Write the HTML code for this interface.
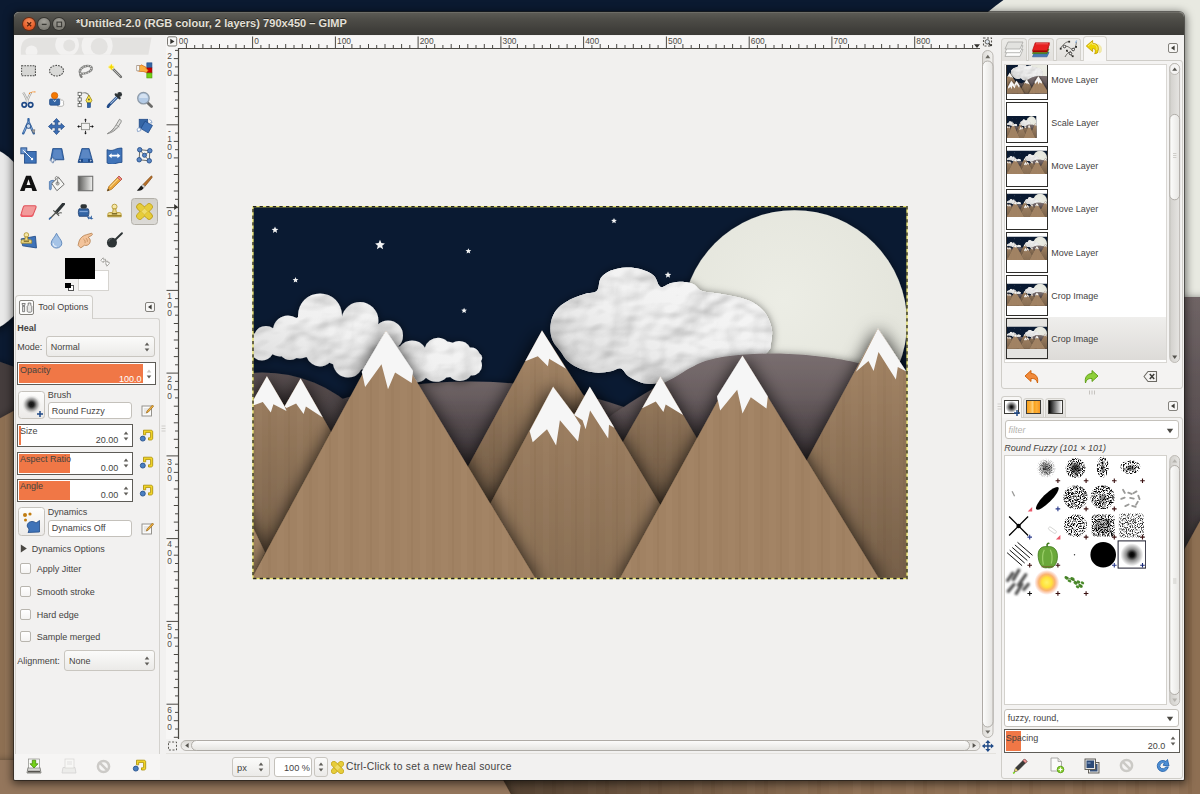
<!DOCTYPE html>
<html>
<head>
<meta charset="utf-8">
<title>GIMP</title>
<style>
*{box-sizing:border-box;margin:0;padding:0}
html,body{width:1200px;height:794px;overflow:hidden}
body{position:relative;font-family:"Liberation Sans",sans-serif;font-size:9px;color:#45433f;background:#0b1a31}
.sb{font-size:10.3px;letter-spacing:.27px}
.abs{position:absolute}
#desk{position:absolute;left:0;top:0;width:1200px;height:794px}
#win{position:absolute;left:14px;top:12px;width:1170px;height:768px;background:#f2f1f0;border-radius:5px 5px 1px 1px;box-shadow:0 2px 9px 2px rgba(0,0,0,.55),0 0 0 1px rgba(40,38,34,.55)}
#tbar{position:absolute;left:0;top:0;width:1170px;height:23.3px;border-radius:5px 5px 0 0;background:linear-gradient(#5b5a54 0,#4d4c47 30%,#403f3b 75%,#3b3a36 100%);border-top:1px solid #6d6c66}
#title{position:absolute;left:62px;top:3.5px;color:#e4e0d8;font-weight:bold;font-size:11px;letter-spacing:.05px;white-space:nowrap;text-shadow:0 -1px 0 rgba(0,0,0,.5)}
.wb{position:absolute;top:5px;width:12.4px;height:12.4px;border-radius:50%}
/* generic widgets */
.txt{position:absolute;white-space:nowrap;line-height:12px;height:12px}
.combo{position:absolute;border:1px solid #c9c6c0;border-radius:3px;background:linear-gradient(#fbfbfa,#ebeae8)}
.entry{position:absolute;border:1px solid #c4c1bb;border-radius:3px;background:#fff}
.slider{position:absolute;border:1px solid #5e5c57;background:#fff}
.fill{position:absolute;left:1px;top:1px;bottom:1px;background:#f07746}
.chk{position:absolute;width:11px;height:11px;border:1px solid #b8b5ae;border-radius:2px;background:linear-gradient(#fff,#f4f3f2)}
</style>
</head>
<body>
<!-- DESKTOP WALLPAPER -->
<svg id="desk" viewBox="0 0 1200 794">
  <defs>
   <pattern id="dcb" width="53" height="10" patternUnits="userSpaceOnUse"><rect width="53" height="10" fill="#8e6f53"/><rect x="5" width="8" height="10" fill="#937458"/><rect x="22" width="4" height="10" fill="#896a4e"/><rect x="34" width="9" height="10" fill="#917256"/></pattern>
   <linearGradient id="dhl" x1="0" y1="297" x2="0" y2="540" gradientUnits="userSpaceOnUse"><stop offset="0" stop-color="#6f6465"/><stop offset=".5" stop-color="#5a5052"/><stop offset="1" stop-color="#3a3435"/></linearGradient>
   <filter id="dsh" x="-20%" y="-20%" width="140%" height="140%"><feDropShadow dx="0" dy="2" stdDeviation="5" flood-color="#000" flood-opacity=".6"/></filter>
  </defs>
  <rect width="1200" height="794" fill="#0b1a31"/>
  <circle cx="1190" cy="260" r="320" fill="#e8e9e1"/>
  <rect x="1150" y="297" width="60" height="300" fill="url(#dhl)" filter="url(#dsh)"/>
  <ellipse cx="-20" cy="239" rx="60" ry="93" fill="#e9e9e9" filter="url(#dsh)"/>
  <polygon points="-5,360 20,369 20,430 -5,430" fill="#453d3e" filter="url(#dsh)"/>
  <polygon points="-5,421 20,407.5 20,800 -5,800" fill="url(#dcb)" filter="url(#dsh)"/>
  <polygon points="1170,575.5 1205,512 1205,800 1170,800" fill="url(#dcb)" filter="url(#dsh)"/>
  <rect x="-5" y="770" width="1210" height="30" fill="url(#dcb)"/>
  <linearGradient id="dbs" x1="500" y1="0" x2="860" y2="0" gradientUnits="userSpaceOnUse"><stop offset="0" stop-color="#000" stop-opacity=".42"/><stop offset=".5" stop-color="#000" stop-opacity=".2"/><stop offset="1" stop-color="#000" stop-opacity="0"/></linearGradient>
  <rect x="500" y="770" width="360" height="30" fill="url(#dbs)"/>
  <polygon points="-5,760 492,760 514,800 -5,800" fill="#94765b" filter="url(#dsh)"/>
</svg>

<!-- WINDOW -->
<div id="win">
  <div id="tbar">
    <div class="wb" style="left:8.6px;background:radial-gradient(circle at 50% 30%,#f7925f,#e65a26 65%,#d64e1d);box-shadow:0 0 0 1px #6e2c12"></div>
    <div class="wb" style="left:23.6px;background:radial-gradient(circle at 50% 30%,#a3a19a,#7f7d76 70%);box-shadow:0 0 0 1px #363531"></div>
    <div class="wb" style="left:38.6px;background:radial-gradient(circle at 50% 30%,#a3a19a,#7f7d76 70%);box-shadow:0 0 0 1px #363531"></div>
    <svg class="abs" style="left:8.6px;top:5px" width="43" height="13" viewBox="0 0 43 13"><path d="M4.2,4.2l4,4M8.200,4.200l-4,4" stroke="#5e230c" stroke-width="1.300"/><path d="M18.800,6.400h4.800" stroke="#3a3935" stroke-width="1.300"/><rect x="34" y="4.100" width="4.600" height="4.600" fill="none" stroke="#3a3935" stroke-width="1.100"/></svg>
    <div id="title">*Untitled-2.0 (RGB colour, 2 layers) 790x450 – GIMP</div>
  </div>
</div>

<!-- CANVAS AREA (absolute page coords) -->
<div id="canvas" class="abs" style="left:178px;top:48px;width:803px;height:691px;background:#f1f0ee"></div>
<!--RULERS-->
<svg class="abs" style="left:0;top:0" width="1200" height="794" viewBox="0 0 1200 794" id="rulers">
<rect x="166" y="36" width="814" height="12.5" fill="#f7f6f5"/><rect x="166" y="48" width="12.5" height="691" fill="#f7f6f5"/>
<clipPath id="rtc"><rect x="179" y="36" width="801" height="13"/></clipPath><clipPath id="rlc"><rect x="166" y="49" width="13" height="690"/></clipPath>
<path d="M178,48.5H980" stroke="#4b4944" stroke-width="1.2" fill="none"/>
<path d="M178.5,48V739" stroke="#4b4944" stroke-width="1.2" fill="none"/>
<g clip-path="url(#rtc)"><path d="M186.4,44V48M194.7,45V48M202.9,44V48M211.2,45V48M219.5,44V48M227.8,45V48M236.0,44V48M244.3,45V48M252.6,36.5V48M260.9,45V48M269.2,44V48M277.4,45V48M285.7,44V48M294.0,45V48M302.3,44V48M310.5,45V48M318.8,44V48M327.1,45V48M335.4,36.5V48M343.6,45V48M351.9,44V48M360.2,45V48M368.5,44V48M376.7,45V48M385.0,44V48M393.3,45V48M401.6,44V48M409.8,45V48M418.1,36.5V48M426.4,45V48M434.7,44V48M442.9,45V48M451.2,44V48M459.5,45V48M467.8,44V48M476.0,45V48M484.3,44V48M492.6,45V48M500.9,36.5V48M509.2,45V48M517.4,44V48M525.7,45V48M534.0,44V48M542.3,45V48M550.5,44V48M558.8,45V48M567.1,44V48M575.4,45V48M583.6,36.5V48M591.9,45V48M600.2,44V48M608.5,45V48M616.7,44V48M625.0,45V48M633.3,44V48M641.6,45V48M649.8,44V48M658.1,45V48M666.4,36.5V48M674.7,45V48M682.9,44V48M691.2,45V48M699.5,44V48M707.8,45V48M716.1,44V48M724.3,45V48M732.6,44V48M740.9,45V48M749.2,36.5V48M757.4,45V48M765.7,44V48M774.0,45V48M782.3,44V48M790.5,45V48M798.8,44V48M807.1,45V48M815.4,44V48M823.6,45V48M831.9,36.5V48M840.2,45V48M848.5,44V48M856.7,45V48M865.0,44V48M873.3,45V48M881.6,44V48M889.8,45V48M898.1,44V48M906.4,45V48M914.7,36.5V48M922.9,45V48M931.2,44V48M939.5,45V48M947.8,44V48M956.1,45V48M964.3,44V48M972.6,45V48" stroke="#4b4944" stroke-width="1" fill="none"/>
<g font-family="Liberation Sans, sans-serif" font-size="8.4" fill="#4f4d48">
<text x="171.4" y="44.3">-100</text>
<text x="254.2" y="44.3">0</text>
<text x="337.0" y="44.3">100</text>
<text x="419.7" y="44.3">200</text>
<text x="502.5" y="44.3">300</text>
<text x="585.2" y="44.3">400</text>
<text x="668.0" y="44.3">500</text>
<text x="750.8" y="44.3">600</text>
<text x="833.5" y="44.3">700</text>
<text x="916.3" y="44.3">800</text>
</g></g>
<g clip-path="url(#rlc)"><path d="M175,50.4H178M173.8,58.6H178M175,66.9H178M173.8,75.2H178M175,83.5H178M173.8,91.7H178M175,100.0H178M173.8,108.3H178M175,116.6H178M166.5,124.8H178M175,133.1H178M173.8,141.4H178M175,149.7H178M173.8,157.9H178M175,166.2H178M173.8,174.5H178M175,182.8H178M173.8,191.0H178M175,199.3H178M166.5,207.6H178M175,215.9H178M173.8,224.2H178M175,232.4H178M173.8,240.7H178M175,249.0H178M173.8,257.3H178M175,265.5H178M173.8,273.8H178M175,282.1H178M166.5,290.4H178M175,298.6H178M173.8,306.9H178M175,315.2H178M173.8,323.5H178M175,331.7H178M173.8,340.0H178M175,348.3H178M173.8,356.6H178M175,364.8H178M166.5,373.1H178M175,381.4H178M173.8,389.7H178M175,397.9H178M173.8,406.2H178M175,414.5H178M173.8,422.8H178M175,431.0H178M173.8,439.3H178M175,447.6H178M166.5,455.9H178M175,464.2H178M173.8,472.4H178M175,480.7H178M173.8,489.0H178M175,497.3H178M173.8,505.5H178M175,513.8H178M173.8,522.1H178M175,530.4H178M166.5,538.6H178M175,546.9H178M173.8,555.2H178M175,563.5H178M173.8,571.7H178M175,580.0H178M173.8,588.3H178M175,596.6H178M173.8,604.8H178M175,613.1H178M166.5,621.4H178M175,629.7H178M173.8,637.9H178M175,646.2H178M173.8,654.5H178M175,662.8H178M173.8,671.1H178M175,679.3H178M173.8,687.6H178M175,695.9H178M166.5,704.2H178M175,712.4H178M173.8,720.7H178M175,729.0H178M173.8,737.3H178" stroke="#4b4944" stroke-width="1" fill="none"/>
<g font-family="Liberation Sans, sans-serif" font-size="8.4" fill="#4f4d48" text-anchor="middle">
<text x="169.5" y="50.9">-</text>
<text x="169.5" y="59.2">2</text>
<text x="169.5" y="67.5">0</text>
<text x="169.5" y="75.8">0</text>
<text x="169.5" y="133.6">-</text>
<text x="169.5" y="141.9">1</text>
<text x="169.5" y="150.2">0</text>
<text x="169.5" y="158.5">0</text>
<text x="169.5" y="216.4">0</text>
<text x="169.5" y="299.2">1</text>
<text x="169.5" y="307.5">0</text>
<text x="169.5" y="315.8">0</text>
<text x="169.5" y="381.9">2</text>
<text x="169.5" y="390.2">0</text>
<text x="169.5" y="398.5">0</text>
<text x="169.5" y="464.7">3</text>
<text x="169.5" y="473.0">0</text>
<text x="169.5" y="481.3">0</text>
<text x="169.5" y="547.4">4</text>
<text x="169.5" y="555.7">0</text>
<text x="169.5" y="564.0">0</text>
<text x="169.5" y="630.2">5</text>
<text x="169.5" y="638.5">0</text>
<text x="169.5" y="646.8">0</text>
<text x="169.5" y="713.0">6</text>
<text x="169.5" y="721.3">0</text>
<text x="169.5" y="729.6">0</text>
</g></g>
<path d="M974,44.2h6l-3,3.8z" fill="#33322e"/>
<path d="M174.2,204h0l3.8,3-3.8,3z" fill="#33322e"/>
<rect x="167.5" y="36.8" width="9.2" height="9.2" rx="1.5" fill="#f7f6f5" stroke="#6d6b65" stroke-width=".9"/><path d="M170.3,38.8v5.2l4.2,-2.6z" fill="#33322e"/>
</svg>
<!--/RULERS-->

<!--ART-->
<svg id="art" class="abs" style="left:253px;top:206.6px" width="654" height="372" viewBox="0 0 654 372">
<symbol id="artsym" viewBox="0 0 654 372" preserveAspectRatio="none">
<defs>
<linearGradient id="cb" x1="0" y1="0" x2="1" y2="0" gradientUnits="objectBoundingBox"><stop offset="0" stop-color="#9c7c5c"/><stop offset=".5" stop-color="#a98969"/><stop offset="1" stop-color="#a08060"/></linearGradient>
<pattern id="cbp" width="41" height="10" patternUnits="userSpaceOnUse"><rect width="41" height="10" fill="#a18263"/><rect x="3" width="6" height="10" fill="#a48566"/><rect x="15" width="3" height="10" fill="#9e7f60"/><rect x="24" width="7" height="10" fill="#a38465"/><rect x="35" width="2" height="10" fill="#9d7e5f"/></pattern>
<linearGradient id="hg" x1="0" y1="146" x2="0" y2="330" gradientUnits="userSpaceOnUse"><stop offset="0" stop-color="#7a6f70"/><stop offset=".22" stop-color="#6a5f61"/><stop offset=".42" stop-color="#50474a"/><stop offset=".64" stop-color="#3a3336"/><stop offset="1" stop-color="#292426"/></linearGradient>
<linearGradient id="hg1" x1="0" y1="0" x2="1" y2="1"><stop offset="0" stop-color="#6a5f60"/><stop offset=".6" stop-color="#463d3f"/><stop offset="1" stop-color="#2f292b"/></linearGradient>
<radialGradient id="mg" cx=".45" cy=".4" r=".7"><stop offset="0" stop-color="#ecede5"/><stop offset=".8" stop-color="#e4e5dc"/><stop offset="1" stop-color="#d6d7ce"/></radialGradient>
<filter id="sh" x="-30%" y="-30%" width="160%" height="160%"><feDropShadow dx="0" dy="1" stdDeviation="9" flood-color="#000" flood-opacity=".85"/></filter>
<filter id="sh2" x="-30%" y="-30%" width="160%" height="160%"><feDropShadow dx="0" dy="1" stdDeviation="4" flood-color="#000" flood-opacity=".55"/></filter>
<filter id="cr" x="0" y="0" width="100%" height="100%" color-interpolation-filters="sRGB"><feTurbulence type="fractalNoise" baseFrequency=".02 .028" numOctaves="3" seed="11" result="n"/><feDiffuseLighting in="n" surfaceScale="3.6" diffuseConstant="1.06" lighting-color="#ffffff" result="l"><feDistantLight azimuth="230" elevation="66"/></feDiffuseLighting><feComposite in="l" in2="SourceAlpha" operator="in" result="lc"/><feBlend in="SourceGraphic" in2="lc" mode="multiply"/></filter>
<linearGradient id="dk" x1="0" y1="150" x2="0" y2="372" gradientUnits="userSpaceOnUse"><stop offset="0" stop-color="#000" stop-opacity="0"/><stop offset="1" stop-color="#000" stop-opacity=".5"/></linearGradient>
<linearGradient id="cg" x1="1" y1="0" x2="0" y2="1"><stop offset="0" stop-color="#f8f8f8"/><stop offset=".55" stop-color="#f0f0f0"/><stop offset="1" stop-color="#d4d4d4"/></linearGradient>
<clipPath id="ac"><rect width="654" height="372"/></clipPath>
</defs>
<g clip-path="url(#ac)">
<rect width="654" height="372" fill="#0a1a32"/>
<g fill="#f4f4f4">
<polygon points="22.0,19.4 23.0,21.7 25.4,21.9 23.5,23.5 24.1,25.9 22.0,24.6 19.9,25.9 20.5,23.5 18.6,21.9 21.0,21.7"/>
<polygon points="127.0,32.8 128.4,36.1 131.9,36.4 129.2,38.7 130.1,42.2 127.0,40.3 123.9,42.2 124.8,38.7 122.1,36.4 125.6,36.1"/>
<polygon points="215.4,41.2 216.2,43.1 218.3,43.3 216.7,44.6 217.2,46.6 215.4,45.6 213.6,46.6 214.1,44.6 212.5,43.3 214.6,43.1"/>
<polygon points="42.5,70.1 43.3,72.0 45.4,72.2 43.8,73.5 44.3,75.5 42.5,74.5 40.7,75.5 41.2,73.5 39.6,72.2 41.7,72.0"/>
<polygon points="211.1,100.7 211.9,102.6 214.0,102.8 212.4,104.1 212.9,106.1 211.1,105.1 209.3,106.1 209.8,104.1 208.2,102.8 210.3,102.6"/>
<polygon points="361.0,10.9 361.8,12.8 363.9,13.0 362.3,14.3 362.8,16.3 361.0,15.2 359.2,16.3 359.7,14.3 358.1,13.0 360.2,12.8"/>
<polygon points="415.0,64.6 415.9,66.8 418.2,66.9 416.5,68.5 417.0,70.8 415.0,69.5 413.0,70.8 413.5,68.5 411.8,66.9 414.1,66.8"/>
</g>
<circle cx="541.5" cy="115.7" r="112.5" fill="url(#mg)" filter="url(#sh2)"/>
<g filter="url(#sh2)"><path d="M344.0,83.7C346.5,81.1 345.5,74.5 347.8,71.1C350.1,67.7 353.6,65.4 357.8,63.6C362.0,61.8 368.0,60.7 373.0,60.5C378.0,60.3 383.4,60.9 388.0,62.3C392.6,63.6 397.5,65.7 400.7,68.6C404.0,71.5 404.6,78.7 407.5,79.9C410.4,81.2 414.4,76.9 418.3,76.1C422.2,75.3 427.1,74.7 430.9,74.9C434.7,75.1 438.1,75.9 441.0,77.4C443.9,78.9 444.7,82.2 448.5,83.7C452.3,85.2 457.7,85.2 463.6,86.2C469.5,87.3 477.9,88.5 483.8,90.0C489.7,91.5 494.7,92.9 498.9,95.0C503.1,97.1 506.3,99.9 509.0,102.6C511.7,105.3 513.6,107.8 515.3,111.4C517.0,115.0 518.6,119.8 519.0,124.0C519.4,128.2 518.6,133.0 517.8,136.6C517.0,140.2 519.1,140.6 514.0,145.4C508.9,150.2 498.2,159.9 487.0,165.4C475.8,170.9 460.1,176.6 447.0,178.4C433.9,180.2 416.4,176.7 408.2,176.4C400.1,176.2 401.5,177.0 398.1,176.9C394.8,176.8 391.9,176.9 388.1,175.6C384.3,174.3 378.9,171.6 375.5,169.3C372.1,166.9 370.8,162.3 367.9,161.5C364.9,160.7 362.0,163.6 357.8,164.3C353.6,165.0 347.7,166.0 342.7,165.6C337.7,165.2 332.2,163.7 327.6,161.8C323.0,159.9 318.4,157.1 315.0,154.2C311.6,151.3 310.0,147.6 307.5,144.2C305.0,140.9 301.6,137.9 299.9,134.1C298.2,130.3 297.4,125.7 297.4,121.5C297.4,117.3 298.2,112.7 299.9,108.9C301.6,105.1 304.1,101.7 307.5,98.8C310.9,95.9 315.8,93.3 320.0,91.3C324.2,89.3 328.6,88.0 332.6,86.7C336.6,85.4 341.5,86.3 344.0,83.7Z" fill="url(#cg)" filter="url(#cr)"/></g>
<circle cx="217.0" cy="651.4" r="477" fill="url(#hg)" filter="url(#sh2)"/>
<path d="M307.0,263.4C313.7,255.9 336.5,228.9 347.0,218.4C357.5,207.9 361.5,206.3 370.0,200.4C378.5,194.5 389.2,188.1 398.0,182.9C406.8,177.7 416.5,173.1 423.0,169.4C429.5,165.7 431.5,163.7 437.0,160.9C442.5,158.2 447.5,155.1 456.0,152.9C464.5,150.7 475.4,148.8 488.0,147.8C500.6,146.8 518.0,146.4 531.5,146.7C545.0,147.0 557.1,148.3 569.0,149.7C580.9,151.2 588.3,152.1 603.0,155.4C617.7,158.7 648.0,167.1 657.0,169.4L667.0,393.4 L307.0,393.4 Z" fill="url(#hg)" filter="url(#sh2)"/>
<circle cx="9.0" cy="302.4" r="137" fill="url(#hg1)" filter="url(#sh2)"/>
<clipPath id="c1p"><circle cx="67.0" cy="108.4" r="22.0"/><circle cx="107.0" cy="113.4" r="18.4"/><circle cx="135.0" cy="128.4" r="15.0"/><circle cx="35.0" cy="123.4" r="15.0"/><circle cx="13.0" cy="131.4" r="12.4"/><circle cx="1.0" cy="138.4" r="12.0"/><circle cx="-9.0" cy="139.4" r="12.0"/><circle cx="9.0" cy="141.4" r="12.0"/><circle cx="37.0" cy="141.4" r="11.6"/><circle cx="67.0" cy="145.4" r="14.0"/><circle cx="95.0" cy="155.4" r="15.0"/><circle cx="57.0" cy="128.4" r="22.0"/><circle cx="87.0" cy="136.4" r="22.0"/><circle cx="27.0" cy="134.4" r="15.0"/><circle cx="109.0" cy="144.4" r="18.0"/><circle cx="119.0" cy="151.4" r="14.0"/><circle cx="47.0" cy="137.4" r="14.0"/><circle cx="185.0" cy="144.4" r="13.6"/><circle cx="206.0" cy="146.4" r="12.4"/><circle cx="218.0" cy="149.4" r="9.0"/><circle cx="224.0" cy="150.8" r="5.2"/><circle cx="159.0" cy="148.4" r="15.0"/><circle cx="183.0" cy="160.4" r="14.4"/><circle cx="207.0" cy="160.4" r="13.6"/><circle cx="219.0" cy="158.4" r="10.0"/><circle cx="163.0" cy="162.4" r="13.0"/><circle cx="193.0" cy="152.4" r="18.0"/><circle cx="147.0" cy="153.4" r="14.0"/><circle cx="88.0" cy="117.4" r="6.0"/><circle cx="119.0" cy="131.4" r="6.0"/><circle cx="51.0" cy="119.4" r="6.0"/><circle cx="24.0" cy="127.4" r="5.0"/></clipPath>
<g filter="url(#sh2)"><g clip-path="url(#c1p)"><rect x="-10" y="80" width="250" height="105" fill="url(#cg)" filter="url(#cr)"/></g></g>
<g filter="url(#sh)"><polygon points="-105.3,378.4 13.9,169.3 31.6,199.6 47.6,171.6 165.5,378.4" fill="url(#cbp)"/><polygon points="-105.3,378.4 13.9,169.3 31.6,199.6 47.6,171.6 165.5,378.4" fill="url(#dk)" opacity=".55"/>
<polygon points="13.9,169.3 -3.0,198.9 1.5,198.0 9.8,195.0 17.8,205.6 20.4,197.3 33.5,203.9 31.6,199.6" fill="#f6f6f6"/>
<polygon points="47.6,171.6 31.6,199.6 33.5,201.1 43.1,196.5 50.6,207.1 52.9,199.5 69.8,210.4" fill="#f6f6f6"/></g>
<g filter="url(#sh)"><polygon points="-13.0,293.4 12.0,345.4 -13.0,393.4" fill="url(#cbp)"/></g>
<g filter="url(#sh)"><polygon points="150.5,378.4 289.0,123.4 451.9,378.4" fill="url(#cbp)"/><polygon points="150.5,378.4 289.0,123.4 451.9,378.4" fill="url(#dk)" opacity="1"/><polygon points="289.0,123.4 272.2,154.2 284.8,149.2 294.9,159.3 296.1,151.7 313.0,161.8" fill="#f6f6f6"/></g>
<g filter="url(#sh)"><polygon points="288.1,378.4 407.4,169.4 530.3,378.4" fill="url(#cbp)"/><polygon points="288.1,378.4 407.4,169.4 530.3,378.4" fill="url(#dk)" opacity="1"/><polygon points="407.4,169.4 389.2,201.2 402.8,194.4 410.4,205.0 412.7,197.4 430.0,208.0" fill="#f6f6f6"/></g>
<g filter="url(#sh)"><polygon points="486.2,378.4 625.0,121.4 790.5,378.4" fill="url(#cbp)"/><polygon points="486.2,378.4 625.0,121.4 790.5,378.4" fill="url(#dk)" opacity="0.55"/><polygon points="625.0,121.4 602.9,164.8 615.5,154.0 620.6,163.9 625.5,145.0 642.9,172.4 644.8,160.1 652.4,163.9 654.0,165.4" fill="#f6f6f6"/></g>
<g filter="url(#sh)"><polygon points="193.6,378.4 300.1,179.7 321.2,208.0 336.8,179.7 455.2,378.4" fill="url(#cbp)"/><polygon points="193.6,378.4 300.1,179.7 321.2,208.0 336.8,179.7 455.2,378.4" fill="url(#dk)" opacity=".3"/>
<polygon points="300.1,179.7 276.6,223.9 279.7,235.2 294.0,222.3 303.1,238.5 306.9,213.3 325.0,234.4 327.7,218.6 321.2,208.0" fill="#f6f6f6"/>
<polygon points="336.8,179.7 321.2,208.0 329.5,213.3 332.6,222.3 337.1,203.4 355.2,231.4 356.0,217.8 361.3,220.8" fill="#f6f6f6"/></g>
<g filter="url(#sh)"><polygon points="-5.0,378.4 133.0,123.7 286.5,378.4" fill="url(#cbp)"/><polygon points="133.0,123.7 108.8,164.8 112.1,179.9 128.5,157.2 135.0,182.2 142.1,165.5 158.7,176.1 159.9,164.0" fill="#f6f6f6"/></g>
<g filter="url(#sh)"><polygon points="363.2,378.4 489.5,148.7 630.1,378.4" fill="url(#cbp)"/><polygon points="489.5,148.7 464.0,189.4 467.2,203.5 484.2,182.8 489.5,206.4 497.8,190.3 513.5,201.6 514.8,189.4" fill="#f6f6f6"/></g>
</g>
</symbol>
<use href="#artsym" width="654" height="372"/>
</svg>
<!--/ART-->

<!--TOOLBOX-->
<svg class="abs" style="left:20px;top:36.5px" width="133" height="19" viewBox="0 0 133 19"><clipPath id="wc"><path d="M.9,17.8V13Q.9,.6 14,.6H131.5L128.4,17.8z"/></clipPath><g clip-path="url(#wc)"><rect width="133" height="19" fill="#e3e2e0"/><circle cx="11.5" cy="14.5" r="6" fill="#f2f1f0"/><circle cx="47.1" cy="7.5" r="11.9" fill="#f2f1f0"/><circle cx="49.250" cy="8.5" r="6" fill="#e3e2e0"/><circle cx="77.1" cy="8.750" r="15.6" fill="#f2f1f0"/><circle cx="79.250" cy="9.4" r="8.5" fill="#e3e2e0"/></g></svg>
<div class="abs" style="left:131px;top:198.4px;width:27px;height:26.4px;border:1px solid #b3b0a9;border-radius:3.5px;background:linear-gradient(#d2d0cb,#dcdad6)"></div>
<svg class="abs" style="left:19.7px;top:61.5px" width="17" height="17" viewBox="0 0 16 16"><rect x="1.5" y="3.5" width="13" height="9.5" fill="#d6d6d4"/><rect x="1.5" y="3.5" width="13" height="9.5" fill="none" stroke="#4a4a48" stroke-width="1" stroke-dasharray="1.6 1"/></svg>
<svg class="abs" style="left:48.4px;top:61.5px" width="17" height="17" viewBox="0 0 16 16"><ellipse cx="8" cy="8.2" rx="6.6" ry="5" fill="#dadad8"/><ellipse cx="8" cy="8.2" rx="6.6" ry="5" fill="none" stroke="#4a4a48" stroke-width="1" stroke-dasharray="1.6 1"/></svg>
<svg class="abs" style="left:77.2px;top:61.5px" width="17" height="17" viewBox="0 0 16 16"><path d="M3.6,11.2C1,8.5 4.5,3.6 10,3.6c4.5,0 5,3.2 2,5.2c-2.8,1.9 -6,2.6 -8.4,2.4c-.9,0 -.6,1.4 .6,2.8" fill="none" stroke="#7d7d7b" stroke-width="2.2" stroke-linecap="round"/><path d="M3.6,11.2C1,8.5 4.5,3.6 10,3.6c4.5,0 5,3.2 2,5.2c-2.8,1.9 -6,2.6 -8.4,2.4" fill="none" stroke="#d9d9d7" stroke-width="1" stroke-dasharray="1.2 1.2"/></svg>
<svg class="abs" style="left:106.1px;top:61.5px" width="17" height="17" viewBox="0 0 16 16"><path d="M6.5,6.5L14,14" stroke="#6e6e6c" stroke-width="2.4" stroke-linecap="round"/><path d="M7,7L13.6,13.6" stroke="#c9c9c7" stroke-width=".8"/><circle cx="5" cy="4.8" r="2.6" fill="#fff6a8"/><path d="M5,1.6l.9,2.3 2.3,.9-2.3,.9-.9,2.3-.9,-2.3-2.3,-.9 2.3,-.9z" fill="#f4d800"/></svg>
<svg class="abs" style="left:135.5px;top:61.5px" width="17" height="17" viewBox="0 0 16 16"><rect x="10.2" y=".8" width="4.8" height="4.6" fill="#3465a4" stroke="#204a87" stroke-width=".6"/><rect x="10.2" y="5.6" width="4.8" height="4.6" fill="#cc0000" stroke="#8f0000" stroke-width=".6"/><rect x="10.2" y="10.4" width="4.8" height="4.6" fill="#73d216" stroke="#4e9a06" stroke-width=".6"/><path d="M1,3.5h3l1,-.8 4.5,2.2v1.2l2,1.6-1.6,2.2-3.2,-1H4L1,8.2z" fill="#fcaf3e" stroke="#ce5c00" stroke-width=".6"/><rect x=".8" y="3.4" width="2.2" height="4.9" fill="#fff" stroke="#888" stroke-width=".5"/></svg>
<svg class="abs" style="left:19.7px;top:90.5px" width="17" height="17" viewBox="0 0 16 16"><path d="M3,1.5c1.5,2 3,5.5 4.2,9M10.5,1.5c-1.5,2 -3,5.5 -4.2,9" stroke="#a8a8a6" stroke-width="2.2" fill="none"/><path d="M3,1.5c1.5,2 3,5.5 4.2,9M10.5,1.5c-1.5,2 -3,5.5 -4.2,9" stroke="#eeeeec" stroke-width=".9" fill="none"/><circle cx="4" cy="13" r="2.1" fill="none" stroke="#204a87" stroke-width="1.6"/><circle cx="10" cy="13" r="2.1" fill="none" stroke="#204a87" stroke-width="1.6"/><path d="M8.5,2.5c2,-1.5 4,-2 6.5,-1.5" stroke="#f57900" stroke-width="1" stroke-dasharray="1 .8" fill="none"/></svg>
<svg class="abs" style="left:48.4px;top:90.5px" width="17" height="17" viewBox="0 0 16 16"><path d="M9,9c0,-2 3,-2.2 3.4,-.4c1.8,-.4 3,1.2 2,2.6c1,1.2 .2,3.2 -1.4,3.2H9z" fill="#fff" stroke="#a0a09e" stroke-width=".7"/><rect x="1.5" y="7.5" width="9.5" height="5.8" rx="1" fill="#3465a4" stroke="#204a87" stroke-width=".7"/><path d="M5,8.2l1.3,2 1.3,-2" fill="none" stroke="#d9e4f2" stroke-width=".8"/><circle cx="6.2" cy="4.3" r="3" fill="#f57900" stroke="#ce5c00" stroke-width=".7"/></svg>
<svg class="abs" style="left:77.2px;top:90.5px" width="17" height="17" viewBox="0 0 16 16"><path d="M2.5,1.5V15" stroke="#555753" stroke-width="1"/><path d="M2.5,3c4,-2.5 8,-1.5 9,2" fill="none" stroke="#888a85" stroke-width="1"/><rect x="1" y="1.2" width="3" height="3" fill="#fff" stroke="#555753" stroke-width=".7"/><rect x="1" y="6.5" width="3" height="3" fill="#fff" stroke="#555753" stroke-width=".7"/><rect x="1" y="11.8" width="3" height="3" fill="#fff" stroke="#555753" stroke-width=".7"/><path d="M11.2,3.8l2.8,5-1.4,2.6h-2.8L8.4,8.8z" fill="#fce94f" stroke="#8f7a00" stroke-width=".7"/><circle cx="11.2" cy="8" r=".9" fill="#555"/><rect x="9.8" y="11.2" width="2.8" height="4.3" fill="#3465a4" stroke="#204a87" stroke-width=".6"/></svg>
<svg class="abs" style="left:106.1px;top:90.5px" width="17" height="17" viewBox="0 0 16 16"><path d="M11.5,4.8L4,12.2c-1,1 -1.6,1.2 -2,2.6" stroke="#204a87" stroke-width="2.6" stroke-linecap="round" fill="none"/><path d="M10.5,5.5L4.2,11.8" stroke="#a9c3e2" stroke-width="1" fill="none"/><path d="M9.2,3.2l3.6,3.6" stroke="#2e3436" stroke-width="2.2" stroke-linecap="round"/><circle cx="12.8" cy="3.2" r="2.3" fill="#2e3436"/></svg>
<svg class="abs" style="left:135.5px;top:90.5px" width="17" height="17" viewBox="0 0 16 16"><path d="M10.5,10.5L14.6,14.6" stroke="#6b6b69" stroke-width="2.6" stroke-linecap="round"/><circle cx="7" cy="6.8" r="5.4" fill="#b4cbe6" stroke="#8d9aa8" stroke-width="1.2"/><path d="M3,6.5a4,4 0 0 1 8,0z" fill="#d5e2f1"/></svg>
<svg class="abs" style="left:19.7px;top:118.3px" width="17" height="17" viewBox="0 0 16 16"><path d="M8,1v2.5M8,3.5L3,14.5M8,3.5l5,11" stroke="#3465a4" stroke-width="2.2" fill="none" stroke-linecap="round"/><path d="M8,3.5L3.4,13.6M8,3.5l4.6,10.1" stroke="#8fb0d9" stroke-width=".8" fill="none"/><circle cx="8" cy="7.6" r="2.2" fill="#c9d6e8" stroke="#204a87" stroke-width=".9"/><path d="M11,11.5l3,-.5-1,3.5z" fill="#aaa" stroke="#555" stroke-width=".5"/></svg>
<svg class="abs" style="left:48.4px;top:118.3px" width="17" height="17" viewBox="0 0 16 16"><path d="M8,.4L10.9,3.7H9.2V6.8H12.3V5.1L15.6,8L12.3,10.9V9.2H9.2V12.3H10.9L8,15.6L5.1,12.3H6.8V9.2H3.7V10.9L.4,8L3.7,5.1V6.8H6.8V3.7H5.1Z" fill="#3c6eb4" stroke="#204a87" stroke-width=".7" stroke-linejoin="round"/></svg>
<svg class="abs" style="left:77.2px;top:118.3px" width="17" height="17" viewBox="0 0 16 16"><rect x="4.2" y="5" width="7.6" height="6" fill="#f2f2f0" stroke="#888a85" stroke-width=".8"/><path d="M8,.4l1.3,1.8H6.7zM8,15.6l1.3,-1.8H6.7zM.2,8l1.8,-1.3v2.6zM15.8,8l-1.8,-1.3v2.6z" fill="#111"/><path d="M8,2v2M8,12v2M2,8h1.6M12.4,8H14" stroke="#111" stroke-width=".8"/></svg>
<svg class="abs" style="left:106.1px;top:118.3px" width="17" height="17" viewBox="0 0 16 16"><path d="M1.2,14.8C4,13.5 7.5,10 9.5,6.5l3.2,-5.3c1.5,.5 2,1.6 1.4,2.8L11,9C8.5,12 5,14 1.2,14.8z" fill="#e2e2e0" stroke="#7d7d7b" stroke-width=".8" stroke-linejoin="round"/><path d="M1.2,14.8C5.5,12.5 9,9.5 11,9" fill="none" stroke="#9a9a98" stroke-width=".7"/><path d="M9.5,6.5l3.2,2" stroke="#8a8a88" stroke-width=".7"/></svg>
<svg class="abs" style="left:135.5px;top:118.3px" width="17" height="17" viewBox="0 0 16 16"><rect x="3" y="1.2" width="8" height="8" fill="#3465a4" stroke="#204a87" stroke-width=".7"/><rect x="6" y="4.5" width="8" height="8" fill="#3f73b8" stroke="#204a87" stroke-width=".7" transform="rotate(30 10 8.5)"/><path d="M12.5,1.5a3,3 0 0 1 2.5,3.2l-1.8,-.2" fill="#fff" stroke="#6f8fbf" stroke-width=".7"/><path d="M1,10.5a3,3 0 0 1 3,-1.2l.5,2.5-3,1z" fill="#fff" stroke="#6f8fbf" stroke-width=".7"/></svg>
<svg class="abs" style="left:19.7px;top:146.5px" width="17" height="17" viewBox="0 0 16 16"><rect x="4.2" y="4.2" width="11" height="11" fill="#3f73b8" stroke="#204a87" stroke-width=".8"/><rect x=".8" y=".8" width="5.6" height="5.6" fill="#6d97cf" stroke="#204a87" stroke-width=".8"/><path d="M3,3l8.5,8.5" stroke="#fff" stroke-width=".9"/><circle cx="11.3" cy="11.3" r="1.1" fill="#fff"/></svg>
<svg class="abs" style="left:48.4px;top:146.5px" width="17" height="17" viewBox="0 0 16 16"><path d="M4.5,1.5h8.5l2,10.5H2.5z" fill="#3f73b8" stroke="#204a87" stroke-width=".8"/><path d="M5.5,2.5h6.6l1.6,8.5H4z" fill="#5b87c4"/><path d="M3.8,9.8v1.8H2v1.4h1.8v1.8h1.4V13H7v-1.4H5.2V9.8z" fill="#fff" stroke="#204a87" stroke-width=".5"/></svg>
<svg class="abs" style="left:77.2px;top:146.5px" width="17" height="17" viewBox="0 0 16 16"><path d="M4.6,1.5h6.8l3.6,13H1z" fill="#3f73b8" stroke="#204a87" stroke-width=".8"/><path d="M5.3,2.5h5.4l2.2,8H3.1z" fill="#5b87c4"/><path d="M2,11.2h3.6v3H1.2zM10.4,11.2H14l.8,3h-4.4z" fill="#204a87"/><path d="M2.2,12.8l1.2,-1v2zM13.8,12.8l-1.2,-1v2z" fill="#fff"/></svg>
<svg class="abs" style="left:106.1px;top:146.5px" width="17" height="17" viewBox="0 0 16 16"><path d="M1,2.5c2.5,1 5,1 7,0s4.5,-1.5 7,-1.5v13.5c-2.5,0 -5,.5 -7,1.5s-4.5,0 -7,-1z" fill="#3f73b8" stroke="#204a87" stroke-width=".8"/><path d="M2.5,8.2l2.8,-2.3v1.5h5.4v-1.5l2.8,2.3-2.8,2.3v-1.5H5.3v1.5z" fill="#fff"/></svg>
<svg class="abs" style="left:135.5px;top:146.5px" width="17" height="17" viewBox="0 0 16 16"><path d="M3.5,2.5L13,3.5 12.5,13 3,12z M3.5,2.5L8,8 12.5,13M13,3.5L8,8" fill="none" stroke="#555753" stroke-width=".8"/><g fill="#5b87c4" stroke="#204a87" stroke-width=".8"><circle cx="3.5" cy="2.6" r="2.1"/><circle cx="13" cy="3.5" r="2.1"/><circle cx="12.5" cy="13" r="2.1"/><circle cx="3" cy="12" r="2.1"/><circle cx="8" cy="7.8" r="1.9"/></g></svg>
<svg class="abs" style="left:19.7px;top:174.8px" width="17" height="17" viewBox="0 0 16 16"><path d="M5.7,.8h4.6L16,15h-4.3l-.9,-2.7H5.2L4.3,15H0zM6.2,9.3h3.6L8,3.9z" fill="#111"/></svg>
<svg class="abs" style="left:48.4px;top:174.8px" width="17" height="17" viewBox="0 0 16 16"><path d="M1.3,6.2c1.5,-1.2 3.5,-1.5 5,-.8l-2,2.6c-.8,.3 -1.2,1 -1.2,2v3.2c0,.9 -1.8,.9 -1.8,0z" fill="#7a9fd0" stroke="#3465a4" stroke-width=".6"/><path d="M3.6,8L9.8,2l5.4,6.8-6.8,6z" fill="#f6f6f4" stroke="#6e6e6c" stroke-width=".9" stroke-linejoin="round"/><path d="M9.8,3.5c-.6,-3.3 -4,-2.5 -2.6,1.3" fill="none" stroke="#7d7d7b" stroke-width=".9"/><circle cx="9" cy="8" r="1.5" fill="#c4c4c2" stroke="#6e6e6c" stroke-width=".6"/><path d="M9,8V4" stroke="#6e6e6c" stroke-width=".7"/></svg>
<svg class="abs" style="left:77.2px;top:174.8px" width="17" height="17" viewBox="0 0 16 16"><defs><linearGradient id="bg1" x1="0" x2="1"><stop offset="0" stop-color="#5a5a58"/><stop offset="1" stop-color="#f4f4f2"/></linearGradient></defs><rect x="1.2" y="1.2" width="13.6" height="13.6" fill="url(#bg1)" stroke="#6e6e6c" stroke-width="1"/></svg>
<svg class="abs" style="left:106.1px;top:174.8px" width="17" height="17" viewBox="0 0 16 16"><path d="M12.2,1l2.8,2.8L5.3,13.5 1.2,15l1.5,-4.1z" fill="#e9a53a" stroke="#a86a10" stroke-width=".7"/><path d="M3.8,11.2L12.8,2.2" stroke="#f9d98c" stroke-width="1"/><path d="M12.2,1l2.8,2.8-1.4,1.4-2.8,-2.8z" fill="#ef8a8a" stroke="#b04040" stroke-width=".6"/><path d="M1.2,15l.7,-2 1.3,1.3z" fill="#333"/></svg>
<svg class="abs" style="left:135.5px;top:174.8px" width="17" height="17" viewBox="0 0 16 16"><path d="M14.5,.8c.8,.4 .9,1.2 .5,1.8L8.5,10.5 6.5,9z" fill="#b8712a" stroke="#7a4510" stroke-width=".6"/><path d="M8.5,10.5L6.5,9 5,10.2l2.2,2z" fill="#d9d9d7" stroke="#777" stroke-width=".5"/><path d="M5,10.2c-1.5,.5 -1.8,2.8 -4.2,4.3c2.8,.8 5.5,-.3 6.4,-2.3z" fill="#1c1c1c"/></svg>
<svg class="abs" style="left:19.7px;top:203.2px" width="17" height="17" viewBox="0 0 16 16"><path d="M4.5,2.5h9.5c1.2,0 1.4,1 .9,2.2l-2.6,6.5c-.4,1 -1,1.3 -2,1.3H2c-1.2,0 -1.4,-1 -.9,-2.2l1.8,-6c.3,-1.2 .8,-1.8 1.6,-1.8z" fill="#f29a9a" stroke="#e0525a" stroke-width="1"/><path d="M1.4,10.5c0,1.4 .4,2 1.5,2h7.4c1,0 1.5,-.5 2,-1.5" fill="none" stroke="#ef5a64" stroke-width="1.4"/></svg>
<svg class="abs" style="left:48.4px;top:203.2px" width="17" height="17" viewBox="0 0 16 16"><path d="M14.5,1L8,8.5" stroke="#2e3436" stroke-width="3" stroke-linecap="round"/><path d="M8.5,8L2,14.5" stroke="#555753" stroke-width="1.3"/><path d="M5,7l5.5,5M9,10.5c1.5,-1.5 3,-1.5 4,-1" stroke="#555753" stroke-width="1" fill="none"/><path d="M1,15.5l1.8,-2.2" stroke="#3465a4" stroke-width="1.4"/></svg>
<svg class="abs" style="left:77.2px;top:203.2px" width="17" height="17" viewBox="0 0 16 16"><path d="M2,5.5h8.5c1,1.5 1,5 0,7H2c-1,-2 -1,-5.5 0,-7z" fill="#3465a4" stroke="#1d3f73" stroke-width=".8"/><path d="M2.3,8h7.8" stroke="#7fa3d6" stroke-width="1.2"/><rect x="3.3" y="1.2" width="6" height="4" rx="1.6" fill="#2e3436"/><path d="M9.5,13.5l2,-1 .5,1.5 2,-2.5 0,2.5 1.5,.5-2,1 -1.5,-.8-1,.8z" fill="#3465a4"/></svg>
<svg class="abs" style="left:106.1px;top:203.2px" width="17" height="17" viewBox="0 0 16 16"><circle cx="8" cy="3.5" r="2.4" fill="#f6e7a6" stroke="#a98a1c" stroke-width=".7"/><path d="M6.8,5.5h2.4l.6,3.5h3c1,0 1.5,.8 1.5,1.8V13H1.7v-2.2c0,-1 .5,-1.8 1.5,-1.8h3z" fill="#ecd98a" stroke="#a98a1c" stroke-width=".7"/><path d="M1.7,12h12.6" stroke="#8a6d10" stroke-width="1"/><path d="M5.5,10.2h5" stroke="#5c4a08" stroke-width="1.1"/></svg>
<svg class="abs" style="left:135.5px;top:203.2px" width="17" height="17" viewBox="0 0 16 16"><g stroke="#b99a14" stroke-width=".8" fill="#e6cc3a"><rect x="5" y="-1.2" width="6" height="18.4" rx="2.8" transform="rotate(45 8 8)"/><rect x="5" y="-1.2" width="6" height="18.4" rx="2.8" transform="rotate(-45 8 8)"/></g><rect x="5.4" y="-.7" width="5.2" height="17.4" rx="2.5" transform="rotate(45 8 8)" fill="#e6cc3a"/><rect x="5.8" y="5.8" width="4.4" height="4.4" fill="#efdc6a" stroke="#c9ad2a" stroke-width=".4" transform="rotate(45 8 8)"/></svg>
<svg class="abs" style="left:19.7px;top:231.5px" width="17" height="17" viewBox="0 0 16 16"><path d="M1,6.5l13.5,-2.5 1,11L2.5,13z" fill="#3f73b8" stroke="#204a87" stroke-width=".8"/><circle cx="6" cy="2.8" r="2.2" fill="#f6e7a6" stroke="#a98a1c" stroke-width=".7"/><path d="M5,4.6h2l.5,2.8h2.3c.8,0 1.2,.6 1.2,1.4v1.7H1v-1.7c0,-.8 .4,-1.4 1.2,-1.4h2.3z" fill="#ecd98a" stroke="#a98a1c" stroke-width=".7"/><path d="M3.5,8.6h5" stroke="#5c4a08" stroke-width="1"/></svg>
<svg class="abs" style="left:48.4px;top:231.5px" width="17" height="17" viewBox="0 0 16 16"><path d="M8,1.2C9.5,5 13,7.5 13,10.5a5,4.6 0 0 1 -10,0C3,7.5 6.5,5 8,1.2z" fill="#a5c3e6" stroke="#5f87bb" stroke-width=".9"/><path d="M5,10.5a3,3 0 0 0 3,3" fill="none" stroke="#e4eef9" stroke-width="1"/></svg>
<svg class="abs" style="left:77.2px;top:231.5px" width="17" height="17" viewBox="0 0 16 16"><path d="M2,8.5c1,-3 4,-5.5 7,-6l4.5,-1.3c1.2,0 1.3,1.5 .3,2L10.5,5c2,1 2.5,3.5 1.5,5.5c-1,2 -3.5,2.5 -5,2L3.5,15 1,12.5z" fill="#f3c39a" stroke="#b07a48" stroke-width=".7"/><path d="M6,6.5c1.5,1 2,2.5 1.5,4M8.5,5.8c1,1 1.4,2.2 1.2,3.4" fill="none" stroke="#b07a48" stroke-width=".6"/></svg>
<svg class="abs" style="left:106.1px;top:231.5px" width="17" height="17" viewBox="0 0 16 16"><path d="M8,8L15,1.2" stroke="#2e3436" stroke-width="1.8" stroke-linecap="round"/><circle cx="5.6" cy="10" r="4.7" fill="#2e3436"/><path d="M2.6,9a3,3 0 0 1 3,-2.8" fill="none" stroke="#6c7173" stroke-width=".8"/></svg>
<div class="abs" style="left:78.2px;top:269.7px;width:31px;height:21.7px;background:#fff;border:1px solid #d6d4d0"></div>
<div class="abs" style="left:65px;top:257.7px;width:30.2px;height:21.7px;background:#000"></div>
<div class="abs" style="left:68.3px;top:285.4px;width:5.8px;height:5.8px;background:#fff;border:.8px solid #555"></div>
<div class="abs" style="left:65px;top:282.5px;width:5.8px;height:5.8px;background:#000"></div>
<svg class="abs" style="left:100px;top:256.5px" width="10" height="10" viewBox="0 0 10 10"><path d="M.8,3.2l2.4,-2.4v1.5h2.3v1.8H3.2v1.5zM9.2,6.8L6.8,9.2V7.7H5.9V4.2h1.8v1.1h1.5z" fill="#fff" stroke="#8a8883" stroke-width=".7"/></svg>
<!--/TOOLBOX-->
<!--TOOLOPT-->
<div class="abs" style="left:15px;top:318px;width:145px;height:436px;border:1px solid #d4d2ce;border-bottom:none;border-radius:0 3px 0 0;background:#f2f1f0"></div>
<div class="abs" style="left:15px;top:294.5px;width:78px;height:24.5px;border:1px solid #d0cec9;border-bottom:none;border-radius:4px 4px 0 0;background:linear-gradient(#fafaf9,#f2f1f0)"></div>
<svg class="abs" style="left:19px;top:300px" width="15" height="15" viewBox="0 0 15 15"><rect x=".5" y=".5" width="14" height="14" rx="1.5" fill="#fdfdfc" stroke="#77756f" stroke-width=".9"/><path d="M3,3.5h3.2l-.6,2.2h-2zM3.6,6.2h2v5.5h-2z" fill="#e8e8e6" stroke="#555" stroke-width=".7"/><path d="M9.2,3h2.6v2.2l1,1v4.6c0,1 -.6,1.4 -1.4,1.4h-1.8c-.8,0 -1.4,-.4 -1.4,-1.4V6.2l1,-1z" fill="#e8e8e6" stroke="#555" stroke-width=".7"/></svg>
<div class="txt" style="left:38.3px;top:300.8px;">Tool Options</div>
<svg class="abs" style="left:144.8px;top:301.8px" width="10" height="10" viewBox="0 0 10 10"><rect x=".5" y=".5" width="9" height="9" rx="1.5" fill="#f7f6f5" stroke="#77756f" stroke-width=".9"/><path d="M6.6,2.6v4.8l-3.6,-2.4z" fill="#3c3b37"/></svg>
<div class="txt" style="left:17.3px;top:321.7px;"><b>Heal</b></div>
<div class="txt" style="left:17.3px;top:340.9px;">Mode:</div>
<div class="combo" style="left:45.7px;top:335.7px;width:109.6px;height:21.6px"></div>
<div class="txt" style="left:50.7px;top:340.9px;">Normal</div>
<svg class="abs" style="left:143.2px;top:339.5px" width="8" height="14" viewBox="0 0 8 14"><path d="M1.7,5.4h4.6l-2.3,-2.9z" fill="#5f5d58"/><path d="M1.7,8.6h4.6l-2.3,2.9z" fill="#5f5d58"/></svg>
<div class="slider" style="left:17.3px;top:362.3px;width:138.7px;height:23px"><div class="fill" style="width:124px"></div></div>
<div class="txt" style="left:20.0px;top:363.5px;">Opacity</div>
<div class="txt" style="left:119.0px;top:372.5px;color:#fff">100.0</div>
<svg class="abs" style="left:145.2px;top:367.0px" width="8" height="14" viewBox="0 0 8 14"><path d="M1.7,5.4h4.6l-2.3,-2.9z" fill="#c9c7c2"/><path d="M1.7,8.6h4.6l-2.3,2.9z" fill="#5f5d58"/></svg>
<div class="abs" style="left:18.0px;top:390.7px;width:26.5px;height:28.5px;border:1px solid #c6c3bd;border-radius:3.5px;background:linear-gradient(#fdfdfc,#eceae8)"></div>
<div class="abs" style="left:22px;top:395px;width:19px;height:19px;border-radius:50%;background:radial-gradient(circle,#111 0,#222 18%,rgba(60,60,60,.55) 38%,rgba(120,120,120,.15) 58%,rgba(255,255,255,0) 70%)"></div>
<svg class="abs" style="left:36.5px;top:410.5px" width="6" height="6" viewBox="0 0 6 6"><path d="M3,0v6M0,3h6" stroke="#204a87" stroke-width="1.5"/></svg>
<div class="txt" style="left:47.7px;top:388.5px;">Brush</div>
<div class="entry" style="left:48.3px;top:401.7px;width:84px;height:17.6px"></div>
<div class="txt" style="left:51.7px;top:404.8px;">Round Fuzzy</div>
<svg class="abs" style="left:141.0px;top:404.3px" width="13" height="13" viewBox="0 0 13 13"><rect x="1" y="2" width="9.5" height="10" fill="#fbfbfa" stroke="#8a8883" stroke-width=".9"/><path d="M2.8,5h5M2.8,7h5M2.8,9h3.5" stroke="#c4c2bd" stroke-width=".7"/><path d="M11.5,1l1.2,1.2-5.5,6-1.8,.7 .6,-1.9z" fill="#f0b03c" stroke="#8a5a10" stroke-width=".6"/></svg>
<div class="slider" style="left:17.3px;top:424.3px;width:116px;height:23px"><div class="fill" style="width:2.2px"></div></div>
<div class="txt" style="left:20.0px;top:425.1px;">Size</div>
<div class="txt" style="right:1081.7px;top:434.3px;">20.00</div>
<svg class="abs" style="left:122.2px;top:428.8px" width="8" height="14" viewBox="0 0 8 14"><path d="M1.7,5.4h4.6l-2.3,-2.9z" fill="#5f5d58"/><path d="M1.7,8.6h4.6l-2.3,2.9z" fill="#5f5d58"/></svg>
<svg class="abs" style="left:138.8px;top:428.0px" width="15" height="15" viewBox="0 0 15 15"><path d="M4.5,2.2h7.3c1.3,0 1.9,.6 1.9,1.9v6c0,1.3 -.6,1.9 -1.9,1.9H9.5v-2.2h1.6c.4,0 .5,-.1 .5,-.5V4.9c0,-.4 -.1,-.5 -.5,-.5H6.7v2.4H4.5z" fill="#f3d628" stroke="#a88b00" stroke-width=".8" stroke-linejoin="round"/><circle cx="3.8" cy="10.6" r="2.5" fill="#4a7fc1" stroke="#204a87" stroke-width=".8"/></svg>
<div class="slider" style="left:17.3px;top:451.7px;width:116px;height:23px"><div class="fill" style="width:51.0px"></div></div>
<div class="txt" style="left:20.0px;top:452.5px;">Aspect Ratio</div>
<div class="txt" style="right:1081.7px;top:461.7px;">0.00</div>
<svg class="abs" style="left:122.2px;top:456.2px" width="8" height="14" viewBox="0 0 8 14"><path d="M1.7,5.4h4.6l-2.3,-2.9z" fill="#5f5d58"/><path d="M1.7,8.6h4.6l-2.3,2.9z" fill="#5f5d58"/></svg>
<svg class="abs" style="left:138.8px;top:455.4px" width="15" height="15" viewBox="0 0 15 15"><path d="M4.5,2.2h7.3c1.3,0 1.9,.6 1.9,1.9v6c0,1.3 -.6,1.9 -1.9,1.9H9.5v-2.2h1.6c.4,0 .5,-.1 .5,-.5V4.9c0,-.4 -.1,-.5 -.5,-.5H6.7v2.4H4.5z" fill="#f3d628" stroke="#a88b00" stroke-width=".8" stroke-linejoin="round"/><circle cx="3.8" cy="10.6" r="2.5" fill="#4a7fc1" stroke="#204a87" stroke-width=".8"/></svg>
<div class="slider" style="left:17.3px;top:479.0px;width:116px;height:23px"><div class="fill" style="width:51.0px"></div></div>
<div class="txt" style="left:20.0px;top:479.8px;">Angle</div>
<div class="txt" style="right:1081.7px;top:489.0px;">0.00</div>
<svg class="abs" style="left:122.2px;top:483.5px" width="8" height="14" viewBox="0 0 8 14"><path d="M1.7,5.4h4.6l-2.3,-2.9z" fill="#5f5d58"/><path d="M1.7,8.6h4.6l-2.3,2.9z" fill="#5f5d58"/></svg>
<svg class="abs" style="left:138.8px;top:482.7px" width="15" height="15" viewBox="0 0 15 15"><path d="M4.5,2.2h7.3c1.3,0 1.9,.6 1.9,1.9v6c0,1.3 -.6,1.9 -1.9,1.9H9.5v-2.2h1.6c.4,0 .5,-.1 .5,-.5V4.9c0,-.4 -.1,-.5 -.5,-.5H6.7v2.4H4.5z" fill="#f3d628" stroke="#a88b00" stroke-width=".8" stroke-linejoin="round"/><circle cx="3.8" cy="10.6" r="2.5" fill="#4a7fc1" stroke="#204a87" stroke-width=".8"/></svg>
<div class="abs" style="left:18.0px;top:507.3px;width:26.5px;height:28.5px;border:1px solid #c6c3bd;border-radius:3.5px;background:linear-gradient(#fdfdfc,#eceae8)"></div>
<svg class="abs" style="left:21px;top:510.5px" width="21" height="23" viewBox="0 0 21 23"><circle cx="4" cy="4" r="2" fill="#c17d11"/><circle cx="9" cy="3" r="1.6" fill="#c17d11"/><circle cx="4.5" cy="9" r="1.5" fill="#c17d11"/><path d="M7,21.5c1.5,-2 1,-4 -.5,-5.5c-1,-2.5 1,-5.5 4.5,-5.5c1.5,0 3,.5 4,1.5l3.5,-2.5v11.5z" fill="#3f73b8" stroke="#204a87" stroke-width=".8" stroke-linejoin="round"/></svg>
<div class="txt" style="left:47.7px;top:505.8px;">Dynamics</div>
<div class="entry" style="left:48.3px;top:519.7px;width:84px;height:17px"></div>
<div class="txt" style="left:51.7px;top:522.4px;">Dynamics Off</div>
<svg class="abs" style="left:141.0px;top:522.0px" width="13" height="13" viewBox="0 0 13 13"><rect x="1" y="2" width="9.5" height="10" fill="#fbfbfa" stroke="#8a8883" stroke-width=".9"/><path d="M2.8,5h5M2.8,7h5M2.8,9h3.5" stroke="#c4c2bd" stroke-width=".7"/><path d="M11.5,1l1.2,1.2-5.5,6-1.8,.7 .6,-1.9z" fill="#f0b03c" stroke="#8a5a10" stroke-width=".6"/></svg>
<svg class="abs" style="left:20px;top:543.5px" width="8" height="9" viewBox="0 0 8 9"><path d="M.8,.6v7.8l6,-3.9z" fill="#4a4843"/></svg>
<div class="txt" style="left:31.7px;top:542.5px;">Dynamics Options</div>
<div class="chk" style="left:20px;top:562.5px"></div>
<div class="txt" style="left:36.7px;top:562.5px;">Apply Jitter</div>
<div class="chk" style="left:20px;top:585.7px"></div>
<div class="txt" style="left:36.7px;top:585.7px;">Smooth stroke</div>
<div class="chk" style="left:20px;top:608.7px"></div>
<div class="txt" style="left:36.7px;top:608.7px;">Hard edge</div>
<div class="chk" style="left:20px;top:630.7px"></div>
<div class="txt" style="left:36.7px;top:630.7px;">Sample merged</div>
<div class="txt" style="left:17.3px;top:654.8px;">Alignment:</div>
<div class="combo" style="left:64px;top:650px;width:91.3px;height:21px"></div>
<div class="txt" style="left:69.0px;top:654.8px;">None</div>
<svg class="abs" style="left:143.2px;top:653.5px" width="8" height="14" viewBox="0 0 8 14"><path d="M1.7,5.4h4.6l-2.3,-2.9z" fill="#5f5d58"/><path d="M1.7,8.6h4.6l-2.3,2.9z" fill="#5f5d58"/></svg>
<div class="abs" style="left:16px;top:753.5px;width:144px;height:25.5px;background:#f6f5f4"></div>
<svg class="abs" style="left:25.5px;top:757.5px" width="16" height="17" viewBox="0 0 16 17"><path d="M2,9.5h12l1,5.5H1z" fill="#d6d6d2" stroke="#6e6e6a" stroke-width=".8"/><rect x="2.5" y="1" width="11" height="9" fill="#fafaf8" stroke="#8a8a86" stroke-width=".7"/><path d="M6.3,2.2h3.4v3.6h2.3L8,10 4,5.8h2.3z" fill="#73d216" stroke="#3f7d04" stroke-width=".7"/><rect x="2" y="12.8" width="12" height="1.6" fill="#55534e"/></svg>
<svg class="abs" style="left:61px;top:757.5px" width="16" height="17" viewBox="0 0 16 17" opacity=".45"><path d="M2,9.5h12l1,5.5H1z" fill="#e2e2de" stroke="#aaa" stroke-width=".8"/><rect x="4" y="1" width="9" height="9" fill="#fafaf8" stroke="#b0b0ac" stroke-width=".7"/><path d="M6,4h5M6,6h5" stroke="#bbb" stroke-width=".8"/></svg>
<svg class="abs" style="left:96px;top:758.5px" width="15" height="15" viewBox="0 0 15 15" opacity=".8"><circle cx="7.5" cy="7.5" r="5.6" fill="none" stroke="#c2c0bc" stroke-width="2.5"/><path d="M3.6,3.6l7.8,7.8" stroke="#c2c0bc" stroke-width="2.5"/></svg>
<svg class="abs" style="left:131.5px;top:758.3px" width="15" height="15" viewBox="0 0 15 15"><path d="M4.5,2.2h7.3c1.3,0 1.9,.6 1.9,1.9v6c0,1.3 -.6,1.9 -1.9,1.9H9.5v-2.2h1.6c.4,0 .5,-.1 .5,-.5V4.9c0,-.4 -.1,-.5 -.5,-.5H6.7v2.4H4.5z" fill="#f3d628" stroke="#a88b00" stroke-width=".8" stroke-linejoin="round"/><circle cx="3.8" cy="10.6" r="2.5" fill="#4a7fc1" stroke="#204a87" stroke-width=".8"/></svg>
<!--/TOOLOPT-->
<!--DOCK-->
<div class="abs" style="left:1000.5px;top:60px;width:182px;height:329px;border:1px solid #cfcdc8;border-radius:0 3px 3px 3px;background:#f4f3f2"></div>
<div class="abs" style="left:1001.0px;top:37.5px;width:25.5px;height:23px;border:1px solid #d3d1cc;border-bottom:none;border-radius:3.5px 3.5px 0 0;background:linear-gradient(#ecebe8,#e2e0dd)"></div>
<div class="abs" style="left:1028.4px;top:37.5px;width:25.5px;height:23px;border:1px solid #d3d1cc;border-bottom:none;border-radius:3.5px 3.5px 0 0;background:linear-gradient(#ecebe8,#e2e0dd)"></div>
<div class="abs" style="left:1055.7px;top:37.5px;width:25.5px;height:23px;border:1px solid #d3d1cc;border-bottom:none;border-radius:3.5px 3.5px 0 0;background:linear-gradient(#ecebe8,#e2e0dd)"></div>
<div class="abs" style="left:1082.5px;top:36px;width:24.5px;height:25.2px;border:1px solid #d6d4cf;border-bottom:none;border-radius:3.5px 3.5px 0 0;background:#f8f7f6"></div>
<svg class="abs" style="left:1004px;top:40px" width="20" height="19" viewBox="0 0 20 19"><g stroke="#a8a8a4" stroke-width=".8" stroke-linejoin="round"><path d="M4,9.4H19L16,16.4H1z" fill="#fdfdfc"/><path d="M4,5.7H19L16,12.7H1z" fill="#fdfdfc"/><path d="M4,2H19L16,9H1z" fill="#e2e2df"/></g></svg>
<svg class="abs" style="left:1031px;top:39.5px" width="20" height="20" viewBox="0 0 20 20"><path d="M1.5,16.8l2,-4.5h14.5l-2,4.5z" fill="#4a7ab8" stroke="#2a5590" stroke-width=".6"/><path d="M1.5,13.6l2,-4.5h14.5l-2,4.5z" fill="#5aa02c" stroke="#3a7304" stroke-width=".6"/><path d="M1.5,10.6h14.7l2.3,-7.3v1.6l-2.3,7.3H1.5z" fill="#a40000"/><path d="M1.5,10.6L4.2,2.8H18.5L16.2,10.6z" fill="#e62020" stroke="#b00000" stroke-width=".6"/><path d="M5,3.8h12" stroke="#f57070" stroke-width=".8"/></svg>
<svg class="abs" style="left:1058.5px;top:40px" width="20" height="19" viewBox="0 0 20 19"><path d="M1.5,8.5C4,4 7,2 10,1.5M5.5,6.5C9,5 11,9 14,9.5c2,0 3,-4 3.5,-7.5M6,17c1.5,-3 3.5,-5 6,-5.5M7.5,10.5l5.5,5.5" fill="none" stroke="#55534e" stroke-width=".8"/><path d="M16.5,3l1.2,-2.5" stroke="#9ab8dc" stroke-width="1.3"/><g fill="#f4f3f2" stroke="#2e2d2a" stroke-width=".9"><circle cx="5.5" cy="6.5" r="1.3"/><circle cx="14.2" cy="9.5" r="1.3"/><circle cx="11.5" cy="13.5" r="1.3"/></g><g fill="#2e2d2a"><rect x=".8" y="7.8" width="1.8" height="1.8"/><rect x="9.3" y=".8" width="1.8" height="1.8"/><rect x="16.2" y="6" width="1.8" height="1.8"/><rect x="7" y="9.8" width="1.8" height="1.8"/><rect x="12.8" y="15.3" width="1.8" height="1.8"/></g></svg>
<svg class="abs" style="left:1084.5px;top:38.5px" width="21" height="19" viewBox="0 0 21 19"><path d="M10.5,5.2C15,4.8 17.5,8 16,13l-2,1c.8,-2.5 0,-4.3 -2.5,-4.5z" fill="#f6ecaa" stroke="#eadf8a" stroke-width=".6"/><path d="M1.3,7L7.6,1.5V4.4C12.6,4.2 14.8,8 12.3,14l-2.6,.8C11,11.5 10.3,9.6 7.6,9.5V12.6Z" fill="#edd400" stroke="#c4a000" stroke-width=".9" stroke-linejoin="round"/><path d="M3,7L7,3.6V5.2C11,5.2 12.6,7.5 11.8,11" fill="none" stroke="#fbf08a" stroke-width=".8"/></svg>
<svg class="abs" style="left:1168.2px;top:42.8px" width="10" height="10" viewBox="0 0 10 10"><rect x=".5" y=".5" width="9" height="9" rx="1.5" fill="#f7f6f5" stroke="#77756f" stroke-width=".9"/><path d="M6.6,2.6v4.8l-3.6,-2.4z" fill="#3c3b37"/></svg>
<div class="abs" style="left:1004px;top:63.5px;width:163px;height:299.5px;background:#fff;border:1px solid #d9d7d3;overflow:hidden" id="ulist">
<div class="abs" style="left:0;top:252.7px;width:163px;height:43px;background:linear-gradient(#efeeec,#dddbd8)"></div>
<svg class="abs" style="left:1.2px;top:-5.3px" width="42" height="41" viewBox="0 0 42 41"><rect x=".5" y=".5" width="41" height="40" fill="#fff"/><svg x="1" y="-2" width="40" height="36.5" viewBox="270 14 280 255" preserveAspectRatio="none"><use href="#artsym" width="654" height="372"/></svg><rect x=".5" y=".5" width="41" height="40" fill="none" stroke="#2e2d2a" stroke-width="1"/></svg>
<div class="txt" style="left:46.2px;top:9.3px">Move Layer</div>
<svg class="abs" style="left:1.2px;top:37.9px" width="42" height="41" viewBox="0 0 42 41"><rect x=".5" y=".5" width="41" height="40" fill="#fff"/><svg x="1" y="14" width="29.5" height="22" viewBox="0 0 654 372" preserveAspectRatio="none"><use href="#artsym" width="654" height="372"/></svg><rect x=".5" y=".5" width="41" height="40" fill="none" stroke="#2e2d2a" stroke-width="1"/></svg>
<div class="txt" style="left:46.2px;top:52.5px">Scale Layer</div>
<svg class="abs" style="left:1.2px;top:81.1px" width="42" height="41" viewBox="0 0 42 41"><rect x=".5" y=".5" width="41" height="40" fill="#fff"/><svg x="1" y="4.5" width="40" height="23.5" viewBox="0 0 654 372" preserveAspectRatio="none"><use href="#artsym" width="654" height="372"/></svg><rect x=".5" y=".5" width="41" height="40" fill="none" stroke="#2e2d2a" stroke-width="1"/></svg>
<div class="txt" style="left:46.2px;top:95.7px">Move Layer</div>
<svg class="abs" style="left:1.2px;top:124.3px" width="42" height="41" viewBox="0 0 42 41"><rect x=".5" y=".5" width="41" height="40" fill="#fff"/><svg x="1" y="4.5" width="40" height="23.5" viewBox="0 0 654 372" preserveAspectRatio="none"><use href="#artsym" width="654" height="372"/></svg><rect x=".5" y=".5" width="41" height="40" fill="none" stroke="#2e2d2a" stroke-width="1"/></svg>
<div class="txt" style="left:46.2px;top:138.9px">Move Layer</div>
<svg class="abs" style="left:1.2px;top:167.5px" width="42" height="41" viewBox="0 0 42 41"><rect x=".5" y=".5" width="41" height="40" fill="#fff"/><svg x="1" y="4.5" width="40" height="23.5" viewBox="0 0 654 372" preserveAspectRatio="none"><use href="#artsym" width="654" height="372"/></svg><rect x=".5" y=".5" width="41" height="40" fill="none" stroke="#2e2d2a" stroke-width="1"/></svg>
<div class="txt" style="left:46.2px;top:182.1px">Move Layer</div>
<svg class="abs" style="left:1.2px;top:210.7px" width="42" height="41" viewBox="0 0 42 41"><rect x=".5" y=".5" width="41" height="40" fill="#fff"/><svg x="1" y="8.5" width="40" height="22.3" viewBox="0 0 654 372" preserveAspectRatio="none"><use href="#artsym" width="654" height="372"/></svg><rect x=".5" y=".5" width="41" height="40" fill="none" stroke="#2e2d2a" stroke-width="1"/></svg>
<div class="txt" style="left:46.2px;top:225.3px">Crop Image</div>
<svg class="abs" style="left:1.2px;top:253.9px" width="42" height="41" viewBox="0 0 42 41"><rect x=".5" y=".5" width="41" height="40" fill="#e4e3e0"/><svg x="1" y="8.5" width="40" height="22.3" viewBox="0 0 654 372" preserveAspectRatio="none"><use href="#artsym" width="654" height="372"/></svg><rect x=".5" y=".5" width="41" height="40" fill="none" stroke="#2e2d2a" stroke-width="1"/></svg>
<div class="txt" style="left:46.2px;top:268.5px">Crop Image</div>
<svg class="abs" style="left:1.2px;top:297.1px" width="42" height="41" viewBox="0 0 42 41"><rect x=".5" y=".5" width="41" height="40" fill="#fff"/><svg x="1" y="8.5" width="40" height="22.3" viewBox="0 0 654 372" preserveAspectRatio="none"><use href="#artsym" width="654" height="372"/></svg><rect x=".5" y=".5" width="41" height="40" fill="none" stroke="#2e2d2a" stroke-width="1"/></svg>
</div>
<svg class="abs" style="left:1168px;top:62px" width="14" height="302" viewBox="0 0 14 302"><defs><linearGradient id="s1t" x1="0" x2="1"><stop offset="0" stop-color="#d2d0cc"/><stop offset="1" stop-color="#e6e5e2"/></linearGradient><linearGradient id="s1h" x1="0" x2="1"><stop offset="0" stop-color="#fdfdfc"/><stop offset="1" stop-color="#e6e5e2"/></linearGradient></defs><rect x="1.8" y="1.5" width="9.8" height="299" rx="4.9" fill="url(#s1t)" stroke="#b9b6b0" stroke-width=".9"/><rect x="1.8" y="52.4" width="9.8" height="85.4" rx="4.9" fill="url(#s1h)" stroke="#aaa7a1" stroke-width=".9"/><rect x="1.8" y="1.5" width="9.8" height="11" rx="4.9" fill="#f4f3f2" stroke="#b9b6b0" stroke-width=".9"/><path d="M4.2,8.8h5l-2.5,-3.4z" fill="#55534e"/><path d="M4.2,293.5h5l-2.5,3.4z" fill="#55534e"/><path d="M5,91.5h3.4M5,93.5h3.4M5,95.5h3.4" stroke="#c0beb9" stroke-width=".7"/></svg>
<svg class="abs" style="left:1024px;top:368.5px" width="16" height="16" viewBox="0 0 16 16"><path d="M7,1.5L1,7l6,5.5V9.5c3.5,-.2 5.5,.8 6.5,4.5c1,-5 -1,-9.3 -6.5,-9.5z" fill="#f08a3c" stroke="#ce5c00" stroke-width=".9" stroke-linejoin="round"/></svg>
<svg class="abs" style="left:1082.5px;top:368.5px" width="16" height="16" viewBox="0 0 16 16"><path d="M9,1.5L15,7l-6,5.5V9.5c-3.5,-.2 -5.5,.8 -6.5,4.5c-1,-5 1,-9.3 6.5,-9.5z" fill="#8ecf3a" stroke="#5a9a10" stroke-width=".9" stroke-linejoin="round"/></svg>
<svg class="abs" style="left:1143px;top:370px" width="15" height="13" viewBox="0 0 15 13"><path d="M5,1.5h8.5v10H5L1,6.5z" fill="#f4f3f2" stroke="#6b6963" stroke-width="1.1" stroke-linejoin="round"/><path d="M6.8,4l4.4,5M11.2,4l-4.4,5" stroke="#3c3b37" stroke-width="1.5"/></svg>
<svg class="abs" style="left:1088px;top:390px" width="8" height="5" viewBox="0 0 8 5"><path d="M1.5,.5v4M4,.5v4M6.5,.5v4" stroke="#bab8b3" stroke-width=".8"/></svg>
<svg class="abs" style="left:985px;top:388px" width="5" height="10" viewBox="0 0 5 10"><path d="M.5,2h4M.5,4.5h4M.5,7h4" stroke="#bab8b3" stroke-width=".8"/></svg>
<svg class="abs" style="left:160.5px;top:424px" width="5" height="10" viewBox="0 0 5 10"><path d="M.5,2h4M.5,4.5h4M.5,7h4" stroke="#c8c6c1" stroke-width=".8"/></svg>
<svg class="abs" style="left:997px;top:402px" width="5" height="10" viewBox="0 0 5 10"><path d="M.5,2h3.5M.5,4.5h3.5M.5,7h3.5" stroke="#c8c6c1" stroke-width=".8"/></svg>
<div class="abs" style="left:1000.5px;top:416.5px;width:182px;height:362.5px;border:1px solid #cfcdc8;border-radius:0 3px 3px 3px;background:#f4f3f2"></div>
<div class="abs" style="left:1001px;top:396px;width:20.5px;height:21.5px;border:1px solid #d0cec9;border-bottom:none;border-radius:3.5px 3.5px 0 0;background:#f8f7f6"></div>
<div class="abs" style="left:1023.2px;top:397.5px;width:20.5px;height:19.5px;border:1px solid #d3d1cc;border-bottom:none;border-radius:3.5px 3.5px 0 0;background:linear-gradient(#ecebe8,#e2e0dd)"></div>
<div class="abs" style="left:1045.4px;top:397.5px;width:20.5px;height:19.5px;border:1px solid #d3d1cc;border-bottom:none;border-radius:3.5px 3.5px 0 0;background:linear-gradient(#ecebe8,#e2e0dd)"></div>
<div class="abs" style="left:1003.7px;top:399.5px;width:15px;height:14.5px;border:1px solid #3c3b37;background:radial-gradient(circle at 50% 50%,#000 0,#222 15%,#888 40%,#fff 68%)"></div>
<svg class="abs" style="left:1014px;top:409.5px" width="6" height="6" viewBox="0 0 6 6"><path d="M3,0v6M0,3h6" stroke="#204a87" stroke-width="1.5"/></svg>
<div class="abs" style="left:1026.3px;top:399.5px;width:14.5px;height:14.5px;border:1px solid #3c3b37;background:linear-gradient(90deg,#f9a11b 0,#fbb03b 25%,#fdd27f 45%,#f9a11b 55%,#fbb03b 75%,#f7941d 100%)"></div>
<div class="abs" style="left:1048.4px;top:399.5px;width:14.5px;height:14.5px;border:1px solid #3c3b37;background:linear-gradient(90deg,#000,#fff)"></div>
<svg class="abs" style="left:1168.2px;top:401.2px" width="10" height="10" viewBox="0 0 10 10"><rect x=".5" y=".5" width="9" height="9" rx="1.5" fill="#f7f6f5" stroke="#77756f" stroke-width=".9"/><path d="M6.6,2.6v4.8l-3.6,-2.4z" fill="#3c3b37"/></svg>
<div class="entry" style="left:1004.5px;top:420.4px;width:174.5px;height:18.3px"></div>
<div class="txt" style="left:1008.5px;top:424.0px;color:#b5b3ae"><i>filter</i></div>
<svg class="abs" style="left:1165.8px;top:428px" width="8" height="6" viewBox="0 0 8 6"><path d="M.8,.8h6.4l-3.2,4.4z" fill="#4a4843"/></svg>
<div class="txt" style="left:1004.2px;top:441.5px;"><i>Round Fuzzy (101 × 101)</i></div>
<div class="abs" style="left:1003.8px;top:455.3px;width:163.4px;height:250.2px;background:#fff;border:1px solid #d3d1cc"></div>
<svg class="abs" style="left:1004.6px;top:456.0px" width="141.0" height="141.0" viewBox="0 0 141.0 141.0">
<defs><radialGradient id="fz"><stop offset="0" stop-color="#000"/><stop offset=".2" stop-color="#111"/><stop offset=".5" stop-color="#000" stop-opacity=".45"/><stop offset="1" stop-color="#000" stop-opacity="0"/></radialGradient><radialGradient id="fz2"><stop offset="0" stop-color="#000" stop-opacity=".9"/><stop offset=".6" stop-color="#000" stop-opacity=".5"/><stop offset="1" stop-color="#000" stop-opacity="0"/></radialGradient><radialGradient id="sun"><stop offset="0" stop-color="#fff36a"/><stop offset=".4" stop-color="#ffe23a"/><stop offset=".65" stop-color="#f9a04a" stop-opacity=".8"/><stop offset="1" stop-color="#f58a6a" stop-opacity="0"/></radialGradient><filter id="spk" x="0" y="0" width="100%" height="100%"><feTurbulence type="fractalNoise" baseFrequency="1.1" numOctaves="2" seed="3" result="n"/><feColorMatrix in="n" type="matrix" values="0 0 0 0 0 0 0 0 0 0 0 0 0 0 0 4.2 0 0 0 -1.75" result="m"/><feComposite in="SourceGraphic" in2="m" operator="in"/></filter><filter id="spk2" x="0" y="0" width="100%" height="100%"><feTurbulence type="fractalNoise" baseFrequency=".8" numOctaves="2" seed="9" result="n"/><feColorMatrix in="n" type="matrix" values="0 0 0 0 0 0 0 0 0 0 0 0 0 0 0 5 0 0 0 -2.3" result="m"/><feComposite in="SourceGraphic" in2="m" operator="in"/></filter><filter id="bl" x="-20%" y="-20%" width="140%" height="140%"><feGaussianBlur stdDeviation="1.1"/></filter></defs>
<circle cx="41.3" cy="12.1" r="10" fill="url(#fz2)" filter="url(#spk)"/>
<circle cx="41.3" cy="12.1" r="7.5" fill="url(#fz2)" opacity=".55"/>
<path d="M52.9,22.4v4.6M50.6,24.7h4.6" stroke="#3a1010" stroke-width="1.1"/>
<circle cx="70.5" cy="12.1" r="10" fill="#000" filter="url(#spk)"/>
<circle cx="70.5" cy="12.1" r="6.5" fill="url(#fz2)"/>
<path d="M81.1,22.4v4.6M78.8,24.7h4.6" stroke="#3a1010" stroke-width="1.1"/>
<ellipse cx="97.7" cy="11.1" rx="6" ry="10.5" fill="#000" filter="url(#spk2)"/>
<ellipse cx="97.7" cy="12.1" rx="2.5" ry="6" fill="url(#fz2)" opacity=".7"/>
<path d="M109.3,22.4v4.6M107.0,24.7h4.6" stroke="#3a1010" stroke-width="1.1"/>
<ellipse cx="125.4" cy="11.1" rx="10" ry="7" fill="#000" filter="url(#spk2)"/>
<ellipse cx="125.4" cy="12.1" rx="5.5" ry="3.5" fill="url(#fz2)" opacity=".8"/>
<path d="M137.5,22.4v4.6M135.2,24.7h4.6" stroke="#3a1010" stroke-width="1.1"/>
<path d="M7.1,35.3l2.5,5" stroke="#9a9a98" stroke-width="1.3"/>
<path d="M27.2,55.4h-4.5l4.5,-4.5z" fill="#e8586a"/>
<ellipse cx="42.3" cy="42.3" rx="15.5" ry="4.2" fill="#000" transform="rotate(-45 42.3 42.3)"/>
<path d="M52.9,50.6v4.6M50.6,52.9h4.6" stroke="#2a3a8a" stroke-width="1.1"/>
<circle cx="70.5" cy="41.3" r="12" fill="#000" filter="url(#spk)"/>
<path d="M81.1,50.6v4.6M78.8,52.9h4.6" stroke="#3a1010" stroke-width="1.1"/>
<circle cx="97.7" cy="41.3" r="12" fill="#000" filter="url(#spk)"/>
<circle cx="97.7" cy="42.3" r="5" fill="url(#fz2)" opacity=".6"/>
<path d="M109.3,50.6v4.6M107.0,52.9h4.6" stroke="#3a1010" stroke-width="1.1"/>
<rect x="116.2" y="34.4" width="5.5" height="1.8" rx=".9" fill="#9a9a98" transform="rotate(60 118.9 35.3)"/>
<rect x="122.2" y="36.4" width="5.5" height="1.8" rx=".9" fill="#9a9a98" transform="rotate(20 124.9 37.3)"/>
<rect x="127.2" y="35.4" width="5.5" height="1.8" rx=".9" fill="#9a9a98" transform="rotate(-30 129.9 36.3)"/>
<rect x="115.2" y="41.4" width="5.5" height="1.8" rx=".9" fill="#9a9a98" transform="rotate(-20 117.9 42.3)"/>
<rect x="124.2" y="41.4" width="5.5" height="1.8" rx=".9" fill="#9a9a98" transform="rotate(10 126.9 42.3)"/>
<rect x="131.2" y="40.4" width="5.5" height="1.8" rx=".9" fill="#9a9a98" transform="rotate(70 133.9 41.3)"/>
<rect x="119.2" y="48.4" width="5.5" height="1.8" rx=".9" fill="#9a9a98" transform="rotate(-25 121.9 49.3)"/>
<rect x="126.2" y="49.4" width="5.5" height="1.8" rx=".9" fill="#9a9a98" transform="rotate(15 128.9 50.3)"/>
<rect x="129.2" y="46.4" width="5.5" height="1.8" rx=".9" fill="#9a9a98" transform="rotate(-60 131.9 47.3)"/>
<path d="M4.1,79.5L23.1,60.5M4.1,60.5L23.1,79.5" stroke="#000" stroke-width="1.3"/>
<circle cx="13.6" cy="70.0" r="2.2" fill="#000"/>
<path d="M24.7,78.8v4.6M22.4,81.1h4.6" stroke="#2a3a8a" stroke-width="1.1"/>
<rect x="43.3" y="72.5" width="9" height="3" rx="1.5" fill="#fff" stroke="#c8c8c6" stroke-width=".7" transform="rotate(35 47.3 73.5)"/>
<path d="M55.4,83.6h-4.5l4.5,-4.5z" fill="#e8586a"/>
<circle cx="70.5" cy="69.5" r="11.5" fill="#000" filter="url(#spk2)"/>
<path d="M81.1,78.8v4.6M78.8,81.1h4.6" stroke="#3a1010" stroke-width="1.1"/>
<rect x="86.7" y="58.5" width="23" height="22" rx="4" fill="#000" filter="url(#spk)"/>
<rect x="90.7" y="62.5" width="15" height="14" rx="4" fill="#000" opacity=".25"/>
<path d="M109.3,78.8v4.6M107.0,81.1h4.6" stroke="#3a1010" stroke-width="1.1"/>
<rect x="113.9" y="57.5" width="25" height="24" rx="3" fill="#000" filter="url(#spk2)" opacity=".8"/>
<path d="M137.5,78.8v4.6M135.2,81.1h4.6" stroke="#3a1010" stroke-width="1.1"/>
<path d="M2.1,96.7l15,13" stroke="#111" stroke-width="1"/>
<path d="M4.7,94.1l15,13" stroke="#111" stroke-width="1"/>
<path d="M7.3,91.5l15,13" stroke="#111" stroke-width="1"/>
<path d="M9.9,88.9l15,13" stroke="#111" stroke-width="1"/>
<path d="M12.5,86.3l15,13" stroke="#111" stroke-width="1"/>
<path d="M24.7,107.0v4.6M22.4,109.3h4.6" stroke="#3a1010" stroke-width="1.1"/>
<path d="M42.3,90.7c-7,-1 -10,4 -9,11c1,8 5,11 9,10c5,1 9,-2 10,-9c1,-8 -3,-13 -10,-12z" fill="#6aa83a" stroke="#3f7a1c" stroke-width=".8"/>
<path d="M42.3,90.7c-1,-3 1,-4 2,-3" stroke="#3f7a1c" stroke-width="1.6" fill="none"/>
<path d="M39.3,93.7c-2,4 -2,10 -1,15M45.3,93.7c2,4 2,10 1,14" stroke="#9ccf6a" stroke-width="1.2" fill="none"/>
<path d="M36.3,110.7h12" stroke="#7a4a2a" stroke-width="1.5" opacity=".5"/>
<path d="M52.9,107.0v4.6M50.6,109.3h4.6" stroke="#3a1010" stroke-width="1.1"/>
<circle cx="69.5" cy="98.7" r=".7" fill="#333"/>
<circle cx="98.2" cy="98.7" r="12.8" fill="#000"/>
<path d="M109.3,107.0v4.6M107.0,109.3h4.6" stroke="#2a3a8a" stroke-width="1.1"/>
<rect x="113.1" y="84.9" width="27.6" height="27.2" fill="#fff" stroke="#1a1a2a" stroke-width="1"/>
<circle cx="126.9" cy="98.7" r="11.5" fill="url(#fz)"/>
<path d="M137.5,107.0v4.6M135.2,109.3h4.6" stroke="#1a2a7a" stroke-width="1.1"/>
<g filter="url(#bl)">
<rect x="-0.9" y="119.3" width="12" height="3.2" rx="1.5" fill="#555" transform="rotate(-55 5.1 120.9)"/>
<rect x="4.1" y="117.3" width="14" height="3.2" rx="1.5" fill="#555" transform="rotate(-60 11.1 118.9)"/>
<rect x="9.1" y="122.3" width="16" height="3.2" rx="1.5" fill="#555" transform="rotate(-55 17.1 123.9)"/>
<rect x="0.1" y="130.3" width="12" height="3.2" rx="1.5" fill="#555" transform="rotate(-50 6.1 131.9)"/>
<rect x="7.1" y="131.3" width="14" height="3.2" rx="1.5" fill="#555" transform="rotate(-58 14.1 132.9)"/>
<rect x="16.1" y="129.3" width="10" height="3.2" rx="1.5" fill="#555" transform="rotate(-50 21.1 130.9)"/>
</g>
<path d="M24.7,135.2v4.6M22.4,137.5h4.6" stroke="#111" stroke-width="1.1"/>
<circle cx="41.8" cy="126.4" r="12.5" fill="url(#sun)"/>
<path d="M52.9,135.2v4.6M50.6,137.5h4.6" stroke="#3a1010" stroke-width="1.1"/>
<ellipse cx="61.5" cy="121.9" rx="2.2" ry="1.5" fill="#4a8a2a" transform="rotate(30 61.5 121.9)"/>
<ellipse cx="64.5" cy="124.9" rx="2.0" ry="1.4" fill="#4a8a2a" transform="rotate(30 64.5 124.9)"/>
<ellipse cx="67.5" cy="122.9" rx="2.4" ry="1.7" fill="#4a8a2a" transform="rotate(30 67.5 122.9)"/>
<ellipse cx="70.5" cy="126.9" rx="2.2" ry="1.5" fill="#4a8a2a" transform="rotate(30 70.5 126.9)"/>
<ellipse cx="73.5" cy="125.9" rx="2.0" ry="1.4" fill="#4a8a2a" transform="rotate(30 73.5 125.9)"/>
<ellipse cx="75.5" cy="129.9" rx="2.4" ry="1.7" fill="#4a8a2a" transform="rotate(30 75.5 129.9)"/>
<ellipse cx="77.5" cy="126.9" rx="1.8" ry="1.3" fill="#4a8a2a" transform="rotate(30 77.5 126.9)"/>
<ellipse cx="72.5" cy="130.9" rx="1.8" ry="1.3" fill="#4a8a2a" transform="rotate(30 72.5 130.9)"/>
<path d="M60.5,120.9q9,2 17,10" stroke="#3a6a1a" stroke-width=".7" fill="none"/>
<path d="M81.1,135.2v4.6M78.8,137.5h4.6" stroke="#3a1010" stroke-width="1.1"/>
</svg>
<svg class="abs" style="left:1168px;top:454px" width="14" height="254" viewBox="0 0 14 254"><rect x="1.8" y="1.5" width="9.8" height="250" rx="4.9" fill="url(#s1t)" stroke="#b9b6b0" stroke-width=".9"/><rect x="1.8" y="11.5" width="9.8" height="229" rx="4.9" fill="url(#s1h)" stroke="#aaa7a1" stroke-width=".9"/><path d="M4.2,8.6h5l-2.5,-3.4z" fill="#b5b3ae"/><path d="M4.2,244.5h5l-2.5,3.4z" fill="#b5b3ae"/><path d="M5,125h3.4M5,127h3.4M5,129h3.4" stroke="#c0beb9" stroke-width=".7"/></svg>
<div class="entry" style="left:1004.4px;top:709px;width:174.5px;height:17.5px"></div>
<div class="txt" style="left:1007.8px;top:712.0px;">fuzzy, round,</div>
<svg class="abs" style="left:1166px;top:716px" width="8" height="6" viewBox="0 0 8 6"><path d="M.8,.8h6.4l-3.2,4.4z" fill="#4a4843"/></svg>
<div class="slider" style="left:1003.5px;top:729.2px;width:176.3px;height:23.8px"><div class="fill" style="left:1.2px;width:15.8px"></div></div>
<div class="txt" style="left:1005.8px;top:731.5px;">Spacing</div>
<div class="txt" style="right:34.8px;top:740.3px">20.0</div>
<svg class="abs" style="left:1168.9px;top:734.2px" width="8" height="14" viewBox="0 0 8 14"><path d="M1.7,5.4h4.6l-2.3,-2.9z" fill="#5f5d58"/><path d="M1.7,8.6h4.6l-2.3,2.9z" fill="#5f5d58"/></svg>
<svg class="abs" style="left:1012px;top:757.5px" width="16" height="16" viewBox="0 0 16 16"><path d="M12.5,1l2.5,2.5L6,12.5 2.2,14l1.3,-4z" fill="#3a3a38" stroke="#1e1e1c" stroke-width=".6"/><path d="M12.5,1l2.5,2.5-1.6,1.6-2.5,-2.5z" fill="#f29a9a" stroke="#a04848" stroke-width=".5"/><path d="M2.2,14l1.3,-4 2.5,2.5z" fill="#e8d27a"/><path d="M1,15.2l2,-.8" stroke="#73d216" stroke-width="1.5"/></svg>
<svg class="abs" style="left:1048.5px;top:757px" width="16" height="17" viewBox="0 0 16 17"><path d="M2,1h7l3.5,3.5V14H2z" fill="#fbfbfa" stroke="#9a9894" stroke-width=".8"/><path d="M9,1v3.5h3.5" fill="#e6e5e2" stroke="#9a9894" stroke-width=".7"/><circle cx="11.5" cy="12.5" r="3.3" fill="#8ecf3a" stroke="#4e9a06" stroke-width=".8"/><path d="M11.5,10.6v3.8M9.6,12.5h3.8" stroke="#fff" stroke-width="1.1"/></svg>
<svg class="abs" style="left:1083.5px;top:757.5px" width="16" height="16" viewBox="0 0 16 16"><rect x="4.5" y="4.5" width="10.5" height="10.5" fill="#e8e8e6" stroke="#55534e" stroke-width=".9"/><rect x="6" y="6" width="7.5" height="7.5" fill="#37517a"/><rect x="1" y="1" width="10.5" height="10.5" fill="#e8e8e6" stroke="#55534e" stroke-width=".9"/><rect x="2.5" y="2.5" width="7.5" height="7.5" fill="#2c4a78"/><path d="M3.5,5h3" stroke="#9fb8dc" stroke-width="1"/></svg>
<svg class="abs" style="left:1119.3px;top:758px" width="15" height="15" viewBox="0 0 15 15" opacity=".8"><circle cx="7.5" cy="7.5" r="5.6" fill="none" stroke="#c2c0bc" stroke-width="2.5"/><path d="M3.6,3.6l7.8,7.8" stroke="#c2c0bc" stroke-width="2.5"/></svg>
<svg class="abs" style="left:1154.5px;top:757.5px" width="16" height="16" viewBox="0 0 16 16"><path d="M13.2,9a5.5,5.5 0 1 1 -2.2,-5.5l1.5,-2 1.5,6.5-6,-.8 1.6,-1.8a3,3 0 1 0 1,3.6z" fill="#4d8fd6" stroke="#2a66ad" stroke-width=".9" stroke-linejoin="round"/></svg>
<!--/DOCK-->
<!--CHROME-->
<svg class="abs" style="left:0;top:0;pointer-events:none" width="1200" height="794" viewBox="0 0 1200 794">
 <defs>
  <linearGradient id="trv" x1="0" x2="1" y1="0" y2="0"><stop offset="0" stop-color="#dcdad6"/><stop offset=".5" stop-color="#e9e8e5"/><stop offset="1" stop-color="#f1f0ee"/></linearGradient>
  <linearGradient id="thv" x1="0" x2="1" y1="0" y2="0"><stop offset="0" stop-color="#fdfdfc"/><stop offset="1" stop-color="#e4e3e0"/></linearGradient>
  <linearGradient id="trh" x1="0" x2="0" y1="0" y2="1"><stop offset="0" stop-color="#dcdad6"/><stop offset=".5" stop-color="#e9e8e5"/><stop offset="1" stop-color="#f1f0ee"/></linearGradient>
  <linearGradient id="thh" x1="0" x2="0" y1="0" y2="1"><stop offset="0" stop-color="#fdfdfc"/><stop offset="1" stop-color="#e4e3e0"/></linearGradient>
 </defs>
 <!-- marching ants -->
 <rect x="253" y="206.7" width="654" height="371.8" fill="none" stroke="#e8e26a" stroke-width="1.3"/>
 <rect x="253" y="206.7" width="654" height="371.8" fill="none" stroke="#25241f" stroke-width="1.3" stroke-dasharray="3.3 3.3"/>
 <!-- v scrollbar canvas -->
 <rect x="982.5" y="50.5" width="10.5" height="687" rx="5.2" fill="url(#trv)" stroke="#b3b0aa" stroke-width=".9"/>
 <rect x="982.5" y="61" width="10.5" height="666" rx="5.2" fill="url(#thv)" stroke="#a9a6a0" stroke-width=".9"/>
 <path d="M985.3,58.2h5l-2.5,-3.4z" fill="#6a6862"/>
 <path d="M985.3,730.4h5l-2.5,3.4z" fill="#6a6862"/>
 <!-- h scrollbar canvas -->
 <rect x="181" y="740.5" width="799" height="10" rx="5" fill="url(#trh)" stroke="#b3b0aa" stroke-width=".9"/>
 <rect x="191.5" y="740.5" width="778" height="10" rx="5" fill="url(#thh)" stroke="#a9a6a0" stroke-width=".9"/>
 <path d="M188.6,743v5l-3.4,-2.5z" fill="#55534e"/>
 <path d="M972.6,743v5l3.4,-2.5z" fill="#55534e"/>
 <!-- quick mask -->
 <rect x="168.5" y="742" width="8" height="8" fill="none" stroke="#5a5853" stroke-width="1" stroke-dasharray="2 1.6"/>
 <!-- nav top right -->
 <rect x="983.5" y="38" width="8" height="8" fill="none" stroke="#55534e" stroke-width="1.1" stroke-dasharray="2 1.5"/>
 <circle cx="987.3" cy="41.8" r="2.2" fill="#dfe7f1" stroke="#55534e" stroke-width=".9"/><path d="M988.8,43.5l2.6,2.6" stroke="#33322e" stroke-width="1.4"/>
 <!-- nav bottom right: blue cross arrows -->
 <g fill="#204a87" stroke="none"><path d="M987.9,740l2.6,3h-5.2zM987.9,752l2.6,-3h-5.2zM981.9,746l3,-2.6v5.2zM993.9,746l-3,-2.6v5.2z"/><path d="M987.2,742.5h1.4v7h-1.4zM984.4,745.3h7v1.4h-7z"/></g>
</svg>
<!-- status bar -->
<div class="abs" style="left:166px;top:753px;width:830px;height:1px;background:#e4e2de"></div>
<div class="combo" style="left:232px;top:757px;width:38px;height:20px"></div>
<div class="txt" style="left:237px;top:761.5px;font-size:9.3px">px</div>
<svg class="abs" style="left:257px;top:760px" width="8" height="14" viewBox="0 0 8 14"><path d="M1.7,5.4h4.6l-2.300,-2.9zM1.700,8.6h4.6l-2.300,2.9z" fill="#5f5d58"/></svg>
<div class="entry" style="left:273.5px;top:757px;width:38px;height:20px;border-radius:3px"></div>
<div class="txt" style="right:890px;top:761.5px;font-size:9.2px">100 %</div>
<div class="combo" style="left:313.5px;top:757px;width:14px;height:20px"></div>
<svg class="abs" style="left:316.5px;top:760px" width="8" height="14" viewBox="0 0 8 14"><path d="M1.7,5.4h4.6l-2.300,-2.9zM1.700,8.6h4.6l-2.300,2.9z" fill="#5f5d58"/></svg>
<svg class="abs" style="left:330.5px;top:760.5px" width="13" height="13" viewBox="0 0 13 13"><g stroke="#b99a14" stroke-width=".7" fill="#e6cc3a"><rect x="3.9" y="-1.2" width="5.2" height="15.4" rx="2.3" transform="rotate(45 6.5 6.5)"/><rect x="3.9" y="-1.2" width="5.2" height="15.4" rx="2.3" transform="rotate(-45 6.5 6.5)"/></g><rect x="4.6" y="4.6" width="3.8" height="3.8" fill="#efdc6a" transform="rotate(45 6.5 6.5)"/></svg>
<div class="txt sb" id="stxt" style="left:346px;top:761px">Ctrl-Click to set a new heal source</div>
<!--/CHROME-->
</body>
</html>
